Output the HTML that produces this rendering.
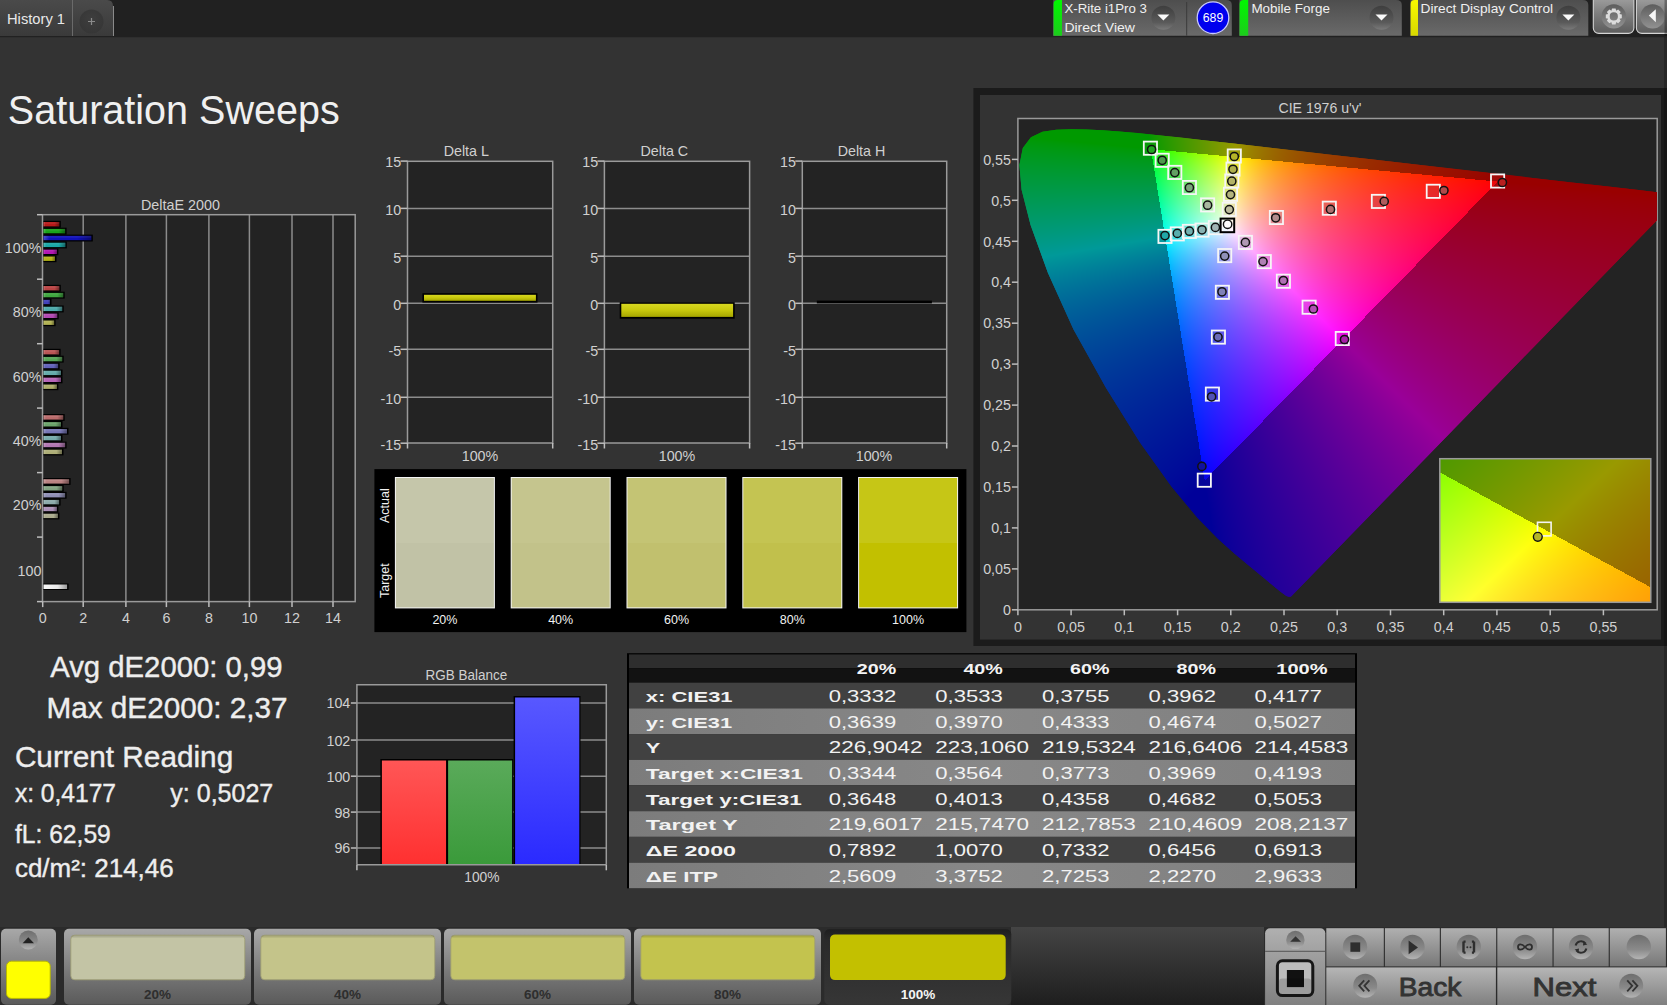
<!DOCTYPE html>
<html><head><meta charset="utf-8"><title>Saturation Sweeps</title>
<style>
html,body{margin:0;padding:0;width:1667px;height:1005px;overflow:hidden;background:#333333;}
svg{position:absolute;left:0;top:0;font-family:"Liberation Sans",sans-serif;}
canvas{position:absolute;}
</style></head><body>
<svg width="1667" height="1005" viewBox="0 0 1667 1005"><defs>
<linearGradient id="tabg" x1="0" y1="0" x2="0" y2="1"><stop offset="0" stop-color="#4a4a4a"/><stop offset="1" stop-color="#3a3a3a"/></linearGradient>
<radialGradient id="plusg" cx="0.5" cy="0.4" r="0.6"><stop offset="0" stop-color="#3e3e3e"/><stop offset="1" stop-color="#363636"/></radialGradient>
<linearGradient id="barsh" x1="0" y1="0" x2="1" y2="0"><stop offset="0" stop-color="#fff" stop-opacity="0.22"/><stop offset="0.12" stop-color="#fff" stop-opacity="0"/><stop offset="0.7" stop-color="#000" stop-opacity="0"/><stop offset="1" stop-color="#000" stop-opacity="0.4"/></linearGradient>
<linearGradient id="whitebar" x1="0" y1="0" x2="1" y2="0"><stop offset="0" stop-color="#fafafa"/><stop offset="0.6" stop-color="#e8e8e8"/><stop offset="1" stop-color="#9a9a9a"/></linearGradient>

<linearGradient id="ybar" x1="0" y1="0" x2="0" y2="1"><stop offset="0" stop-color="#d8d820"/><stop offset="0.5" stop-color="#c8c80c"/><stop offset="1" stop-color="#a6a600"/></linearGradient>

<linearGradient id="ciefb" x1="0" y1="0" x2="1" y2="0"><stop offset="0" stop-color="#009060"/><stop offset="0.35" stop-color="#60d0c0"/><stop offset="0.6" stop-color="#ff60a0"/><stop offset="1" stop-color="#a00010"/></linearGradient>

<linearGradient id="rbar" x1="0" y1="0" x2="0" y2="1"><stop offset="0" stop-color="#ff5656"/><stop offset="1" stop-color="#ff3030"/></linearGradient>
<linearGradient id="gbar" x1="0" y1="0" x2="0" y2="1"><stop offset="0" stop-color="#5aaa5a"/><stop offset="1" stop-color="#3a9a3a"/></linearGradient>
<linearGradient id="bbar" x1="0" y1="0" x2="0" y2="1"><stop offset="0" stop-color="#5858ff"/><stop offset="1" stop-color="#2a2aff"/></linearGradient>
<linearGradient id="lrow" x1="0" y1="0" x2="1" y2="0"><stop offset="0" stop-color="#7c7c7c"/><stop offset="0.5" stop-color="#888888"/><stop offset="1" stop-color="#7e7e7e"/></linearGradient>

<linearGradient id="grs" x1="0" y1="0" x2="0" y2="1"><stop offset="0" stop-color="#00f800"/><stop offset="1" stop-color="#1ccc1c"/></linearGradient>
<linearGradient id="yls" x1="0" y1="0" x2="0" y2="1"><stop offset="0" stop-color="#f8f800"/><stop offset="1" stop-color="#d8d800"/></linearGradient>
<linearGradient id="gbtn" x1="0" y1="0" x2="0" y2="1"><stop offset="0" stop-color="#a6a6a6"/><stop offset="0.5" stop-color="#7e7e7e"/><stop offset="1" stop-color="#5c5c5c"/></linearGradient>
<linearGradient id="gcirc" x1="0" y1="0" x2="0" y2="1"><stop offset="0" stop-color="#5c5c5c"/><stop offset="1" stop-color="#929292"/></linearGradient>
<linearGradient id="btng" x1="0" y1="0" x2="0" y2="1"><stop offset="0" stop-color="#a8a8a8"/><stop offset="0.66" stop-color="#727272"/><stop offset="1" stop-color="#5a5a5a"/></linearGradient>
<linearGradient id="btng2" x1="0" y1="0" x2="0" y2="1"><stop offset="0" stop-color="#b0b0b0"/><stop offset="1" stop-color="#787878"/></linearGradient>
<linearGradient id="btng3" x1="0" y1="0" x2="0" y2="1"><stop offset="0" stop-color="#b6b6b6"/><stop offset="1" stop-color="#7c7c7c"/></linearGradient>
<linearGradient id="selg" x1="0" y1="0" x2="0" y2="1"><stop offset="0" stop-color="#1e1e1e"/><stop offset="0.15" stop-color="#2a2a2a"/><stop offset="1" stop-color="#363636"/></linearGradient>
<linearGradient id="fdark" x1="0" y1="0" x2="0" y2="1"><stop offset="0" stop-color="#444444"/><stop offset="1" stop-color="#1e1e1e"/></linearGradient>
<linearGradient id="circg" x1="0" y1="0" x2="0" y2="1"><stop offset="0" stop-color="#6e6e6e"/><stop offset="0.6" stop-color="#8a8a8a"/><stop offset="1" stop-color="#b4b4b4"/></linearGradient>
<linearGradient id="tpg" x1="0" y1="0" x2="0" y2="1"><stop offset="0" stop-color="#4e4e4e"/><stop offset="1" stop-color="#6a6a6a"/></linearGradient>
<linearGradient id="ddg" x1="0" y1="0" x2="0" y2="1"><stop offset="0" stop-color="#3e3e3e"/><stop offset="0.7" stop-color="#5a5a5a"/><stop offset="1" stop-color="#7a7a7a"/></linearGradient>
</defs>
<rect x="0" y="0" width="1667" height="37.2" fill="#212121"/>
<path d="M0 0 H107 Q113 0 113 6 V36 H0 Z" fill="url(#tabg)"/>
<line x1="72.5" y1="0" x2="72.5" y2="36" stroke="#6a6a6a" stroke-width="1"/>
<path d="M113.5 6 V36" stroke="#8a8a8a" stroke-width="1" fill="none"/>
<circle cx="91.5" cy="21.5" r="12" fill="url(#plusg)"/>
<path d="M88 21.5 H95 M91.5 18 V25" stroke="#8a8a8a" stroke-width="1.2"/>
<text x="7.0" y="24.2" font-size="14.3" fill="#e8e8e8" textLength="58.0" lengthAdjust="spacingAndGlyphs">History 1</text>
<path d="M1053.2 0 H1226 Q1231.8 0 1231.8 5 V35.7 H1053.2 Z" fill="url(#tpg)"/>
<path d="M1053.6 35.7 V4 Q1053.6 0 1057.6 0 H1062 V35.7 Z" fill="url(#grs)"/>
<line x1="1186.7" y1="2" x2="1186.7" y2="35.7" stroke="#3a3a3a" stroke-width="1"/>
<text x="1064.4" y="13.2" font-size="13.3" fill="#f0f0f0" textLength="82.5" lengthAdjust="spacingAndGlyphs">X-Rite i1Pro 3</text>
<text x="1064.4" y="32.0" font-size="13.3" fill="#f0f0f0" textLength="70.6" lengthAdjust="spacingAndGlyphs">Direct View</text>
<circle cx="1163.4" cy="17.7" r="12" fill="url(#ddg)"/>
<path d="M1157.4 14.4 H1169.4 L1163.4 20.6 Z" fill="#fafafa"/>
<circle cx="1213" cy="17.7" r="15.8" fill="#0000ee" stroke="#c8c8ff" stroke-width="1.3"/>
<text x="1213.0" y="22.3" font-size="12.3" fill="#ffffff" text-anchor="middle">689</text>
<path d="M1239.3 0 H1396 Q1401.8 0 1401.8 5 V35.7 H1239.3 Z" fill="url(#tpg)"/>
<path d="M1239.6 35.7 V4 Q1239.6 0 1243.6 0 H1248.2 V35.7 Z" fill="url(#grs)"/>
<text x="1251.4" y="13.2" font-size="13.3" fill="#f0f0f0" textLength="78.5" lengthAdjust="spacingAndGlyphs">Mobile Forge</text>
<circle cx="1381.5" cy="17.7" r="12" fill="url(#ddg)"/>
<path d="M1375.5 14.4 H1387.5 L1381.5 20.6 Z" fill="#fafafa"/>
<path d="M1410.4 0 H1582.5 Q1588.3 0 1588.3 5 V35.7 H1410.4 Z" fill="url(#tpg)"/>
<path d="M1410.6 35.7 V4 Q1410.6 0 1414.6 0 H1418 V35.7 Z" fill="url(#yls)"/>
<text x="1420.6" y="13.2" font-size="13.3" fill="#f0f0f0" textLength="132.5" lengthAdjust="spacingAndGlyphs">Direct Display Control</text>
<circle cx="1568.4" cy="17.7" r="12" fill="url(#ddg)"/>
<path d="M1562.4 14.4 H1574.4 L1568.4 20.6 Z" fill="#fafafa"/>
<rect x="1593.3" y="-6" width="40.6" height="39.4" rx="5.5" fill="url(#gbtn)" stroke="#d4d4d4" stroke-width="1.1"/>
<circle cx="1613.8" cy="16.4" r="12.2" fill="url(#gcirc)"/>
<path d="M1611.42 10.78 L1612.01 8.40 L1615.59 8.40 L1616.18 10.78 L1616.09 10.75 L1618.19 9.48 L1620.72 12.01 L1619.45 14.11 L1619.42 14.02 L1621.80 14.61 L1621.80 18.19 L1619.42 18.78 L1619.45 18.69 L1620.72 20.79 L1618.19 23.32 L1616.09 22.05 L1616.18 22.02 L1615.59 24.40 L1612.01 24.40 L1611.42 22.02 L1611.51 22.05 L1609.41 23.32 L1606.88 20.79 L1608.15 18.69 L1608.18 18.78 L1605.80 18.19 L1605.80 14.61 L1608.18 14.02 L1608.15 14.11 L1606.88 12.01 L1609.41 9.48 L1611.51 10.75 Z M1617.9 16.4 A4.1 4.1 0 1 0 1609.7 16.4 A4.1 4.1 0 1 0 1617.9 16.4 Z" fill="#dcdcdc" fill-rule="evenodd"/>
<rect x="1636.4" y="-6" width="40" height="39.4" rx="5.5" fill="url(#gbtn)" stroke="#d4d4d4" stroke-width="1.1"/>
<circle cx="1652.6" cy="16.4" r="12.2" fill="url(#gcirc)"/>
<path d="M1655.8 9.2 V22.2 L1648.8 15.6 Z" fill="#f6f6f6"/>
<rect x="1664.5" y="0" width="2.5" height="36" fill="#000" opacity="0.3"/>
<text x="7.8" y="123.8" font-size="40.7" fill="#f0f0f0" textLength="332.0" lengthAdjust="spacingAndGlyphs">Saturation Sweeps</text>
<text x="180.5" y="209.6" font-size="14.3" fill="#d0d0d0" text-anchor="middle" textLength="79.0" lengthAdjust="spacingAndGlyphs">DeltaE 2000</text>
<rect x="42.5" y="214.7" width="312.7" height="386.9" fill="#232323"/>
<line x1="83.2" y1="214.7" x2="83.2" y2="601.6" stroke="#8c8c8c" stroke-width="1.5"/>
<line x1="125.9" y1="214.7" x2="125.9" y2="601.6" stroke="#8c8c8c" stroke-width="1.5"/>
<line x1="166.4" y1="214.7" x2="166.4" y2="601.6" stroke="#8c8c8c" stroke-width="1.5"/>
<line x1="208.9" y1="214.7" x2="208.9" y2="601.6" stroke="#8c8c8c" stroke-width="1.5"/>
<line x1="249.4" y1="214.7" x2="249.4" y2="601.6" stroke="#8c8c8c" stroke-width="1.5"/>
<line x1="292.0" y1="214.7" x2="292.0" y2="601.6" stroke="#8c8c8c" stroke-width="1.5"/>
<line x1="333.0" y1="214.7" x2="333.0" y2="601.6" stroke="#8c8c8c" stroke-width="1.5"/>
<rect x="42.5" y="214.7" width="312.7" height="386.9" fill="none" stroke="#9a9a9a" stroke-width="1.5"/>
<line x1="37" y1="214.7" x2="42.5" y2="214.7" stroke="#bdbdbd" stroke-width="1.5"/>
<line x1="37" y1="279.2" x2="42.5" y2="279.2" stroke="#bdbdbd" stroke-width="1.5"/>
<line x1="37" y1="343.7" x2="42.5" y2="343.7" stroke="#bdbdbd" stroke-width="1.5"/>
<line x1="37" y1="408.1" x2="42.5" y2="408.1" stroke="#bdbdbd" stroke-width="1.5"/>
<line x1="37" y1="472.6" x2="42.5" y2="472.6" stroke="#bdbdbd" stroke-width="1.5"/>
<line x1="37" y1="537.1" x2="42.5" y2="537.1" stroke="#bdbdbd" stroke-width="1.5"/>
<line x1="37" y1="601.6" x2="42.5" y2="601.6" stroke="#bdbdbd" stroke-width="1.5"/>
<line x1="42.7" y1="601.6" x2="42.7" y2="607.1" stroke="#bdbdbd" stroke-width="1.5"/>
<text x="42.7" y="622.9" font-size="14.3" fill="#d0d0d0" text-anchor="middle">0</text>
<line x1="83.2" y1="601.6" x2="83.2" y2="607.1" stroke="#bdbdbd" stroke-width="1.5"/>
<text x="83.2" y="622.9" font-size="14.3" fill="#d0d0d0" text-anchor="middle">2</text>
<line x1="125.9" y1="601.6" x2="125.9" y2="607.1" stroke="#bdbdbd" stroke-width="1.5"/>
<text x="125.9" y="622.9" font-size="14.3" fill="#d0d0d0" text-anchor="middle">4</text>
<line x1="166.4" y1="601.6" x2="166.4" y2="607.1" stroke="#bdbdbd" stroke-width="1.5"/>
<text x="166.4" y="622.9" font-size="14.3" fill="#d0d0d0" text-anchor="middle">6</text>
<line x1="208.9" y1="601.6" x2="208.9" y2="607.1" stroke="#bdbdbd" stroke-width="1.5"/>
<text x="208.9" y="622.9" font-size="14.3" fill="#d0d0d0" text-anchor="middle">8</text>
<line x1="249.4" y1="601.6" x2="249.4" y2="607.1" stroke="#bdbdbd" stroke-width="1.5"/>
<text x="249.4" y="622.9" font-size="14.3" fill="#d0d0d0" text-anchor="middle">10</text>
<line x1="292.0" y1="601.6" x2="292.0" y2="607.1" stroke="#bdbdbd" stroke-width="1.5"/>
<text x="292.0" y="622.9" font-size="14.3" fill="#d0d0d0" text-anchor="middle">12</text>
<line x1="333.0" y1="601.6" x2="333.0" y2="607.1" stroke="#bdbdbd" stroke-width="1.5"/>
<text x="333.0" y="622.9" font-size="14.3" fill="#d0d0d0" text-anchor="middle">14</text>
<text x="41.4" y="253.3" font-size="14.3" fill="#d0d0d0" text-anchor="end">100%</text>
<text x="41.4" y="317.2" font-size="14.3" fill="#d0d0d0" text-anchor="end">80%</text>
<text x="41.4" y="381.5" font-size="14.3" fill="#d0d0d0" text-anchor="end">60%</text>
<text x="41.4" y="445.8" font-size="14.3" fill="#d0d0d0" text-anchor="end">40%</text>
<text x="41.4" y="510.0" font-size="14.3" fill="#d0d0d0" text-anchor="end">20%</text>
<text x="41.4" y="575.9" font-size="14.3" fill="#d0d0d0" text-anchor="end">100</text>
<rect x="43.5" y="220.8" width="17.3" height="6.9" fill="#000"/>
<rect x="43.5" y="222.0" width="15.8" height="4.4" fill="#b61a1a"/>
<rect x="43.5" y="222.0" width="15.8" height="4.4" fill="url(#barsh)"/>
<rect x="43.5" y="222.4" width="15.8" height="1.4" fill="#fff" opacity="0.08"/>
<rect x="43.5" y="227.7" width="23.1" height="6.9" fill="#000"/>
<rect x="43.5" y="228.9" width="21.6" height="4.4" fill="#1aa31a"/>
<rect x="43.5" y="228.9" width="21.6" height="4.4" fill="url(#barsh)"/>
<rect x="43.5" y="229.3" width="21.6" height="1.4" fill="#fff" opacity="0.08"/>
<rect x="43.5" y="234.6" width="49.3" height="6.9" fill="#000"/>
<rect x="43.5" y="235.8" width="47.8" height="4.4" fill="#1010ba"/>
<rect x="43.5" y="235.8" width="47.8" height="4.4" fill="url(#barsh)"/>
<rect x="43.5" y="236.2" width="47.8" height="1.4" fill="#fff" opacity="0.08"/>
<rect x="43.5" y="241.5" width="23.3" height="6.9" fill="#000"/>
<rect x="43.5" y="242.7" width="21.8" height="4.4" fill="#1aa7a7"/>
<rect x="43.5" y="242.7" width="21.8" height="4.4" fill="url(#barsh)"/>
<rect x="43.5" y="243.1" width="21.8" height="1.4" fill="#fff" opacity="0.08"/>
<rect x="43.5" y="248.4" width="14.9" height="6.9" fill="#000"/>
<rect x="43.5" y="249.6" width="13.4" height="4.4" fill="#b216b2"/>
<rect x="43.5" y="249.6" width="13.4" height="4.4" fill="url(#barsh)"/>
<rect x="43.5" y="250.0" width="13.4" height="1.4" fill="#fff" opacity="0.08"/>
<rect x="43.5" y="255.3" width="13.0" height="6.9" fill="#000"/>
<rect x="43.5" y="256.5" width="11.5" height="4.4" fill="#b2b216"/>
<rect x="43.5" y="256.5" width="11.5" height="4.4" fill="url(#barsh)"/>
<rect x="43.5" y="256.9" width="11.5" height="1.4" fill="#fff" opacity="0.08"/>
<rect x="43.5" y="284.8" width="17.3" height="6.9" fill="#000"/>
<rect x="43.5" y="286.0" width="15.8" height="4.4" fill="#ba4444"/>
<rect x="43.5" y="286.0" width="15.8" height="4.4" fill="url(#barsh)"/>
<rect x="43.5" y="286.4" width="15.8" height="1.4" fill="#fff" opacity="0.08"/>
<rect x="43.5" y="291.7" width="21.2" height="6.9" fill="#000"/>
<rect x="43.5" y="292.9" width="19.7" height="4.4" fill="#3fa73f"/>
<rect x="43.5" y="292.9" width="19.7" height="4.4" fill="url(#barsh)"/>
<rect x="43.5" y="293.3" width="19.7" height="1.4" fill="#fff" opacity="0.08"/>
<rect x="43.5" y="298.6" width="8.0" height="6.9" fill="#000"/>
<rect x="43.5" y="299.8" width="6.5" height="4.4" fill="#4242ba"/>
<rect x="43.5" y="299.8" width="6.5" height="4.4" fill="url(#barsh)"/>
<rect x="43.5" y="300.2" width="6.5" height="1.4" fill="#fff" opacity="0.08"/>
<rect x="43.5" y="305.5" width="20.2" height="6.9" fill="#000"/>
<rect x="43.5" y="306.7" width="18.7" height="4.4" fill="#4ca9a9"/>
<rect x="43.5" y="306.7" width="18.7" height="4.4" fill="url(#barsh)"/>
<rect x="43.5" y="307.1" width="18.7" height="1.4" fill="#fff" opacity="0.08"/>
<rect x="43.5" y="312.4" width="15.2" height="6.9" fill="#000"/>
<rect x="43.5" y="313.6" width="13.7" height="4.4" fill="#b248b2"/>
<rect x="43.5" y="313.6" width="13.7" height="4.4" fill="url(#barsh)"/>
<rect x="43.5" y="314.0" width="13.7" height="1.4" fill="#fff" opacity="0.08"/>
<rect x="43.5" y="319.3" width="12.1" height="6.9" fill="#000"/>
<rect x="43.5" y="320.5" width="10.6" height="4.4" fill="#b2b253"/>
<rect x="43.5" y="320.5" width="10.6" height="4.4" fill="url(#barsh)"/>
<rect x="43.5" y="320.9" width="10.6" height="1.4" fill="#fff" opacity="0.08"/>
<rect x="43.5" y="348.8" width="17.1" height="6.9" fill="#000"/>
<rect x="43.5" y="350.0" width="15.6" height="4.4" fill="#ba5555"/>
<rect x="43.5" y="350.0" width="15.6" height="4.4" fill="url(#barsh)"/>
<rect x="43.5" y="350.4" width="15.6" height="1.4" fill="#fff" opacity="0.08"/>
<rect x="43.5" y="355.7" width="20.2" height="6.9" fill="#000"/>
<rect x="43.5" y="356.9" width="18.7" height="4.4" fill="#55a355"/>
<rect x="43.5" y="356.9" width="18.7" height="4.4" fill="url(#barsh)"/>
<rect x="43.5" y="357.3" width="18.7" height="1.4" fill="#fff" opacity="0.08"/>
<rect x="43.5" y="362.6" width="16.1" height="6.9" fill="#000"/>
<rect x="43.5" y="363.8" width="14.6" height="4.4" fill="#6262ba"/>
<rect x="43.5" y="363.8" width="14.6" height="4.4" fill="url(#barsh)"/>
<rect x="43.5" y="364.2" width="14.6" height="1.4" fill="#fff" opacity="0.08"/>
<rect x="43.5" y="369.5" width="19.0" height="6.9" fill="#000"/>
<rect x="43.5" y="370.7" width="17.5" height="4.4" fill="#64abab"/>
<rect x="43.5" y="370.7" width="17.5" height="4.4" fill="url(#barsh)"/>
<rect x="43.5" y="371.1" width="17.5" height="1.4" fill="#fff" opacity="0.08"/>
<rect x="43.5" y="376.4" width="19.0" height="6.9" fill="#000"/>
<rect x="43.5" y="377.6" width="17.5" height="4.4" fill="#b664b6"/>
<rect x="43.5" y="377.6" width="17.5" height="4.4" fill="url(#barsh)"/>
<rect x="43.5" y="378.0" width="17.5" height="1.4" fill="#fff" opacity="0.08"/>
<rect x="43.5" y="383.3" width="14.9" height="6.9" fill="#000"/>
<rect x="43.5" y="384.5" width="13.4" height="4.4" fill="#aeae68"/>
<rect x="43.5" y="384.5" width="13.4" height="4.4" fill="url(#barsh)"/>
<rect x="43.5" y="384.9" width="13.4" height="1.4" fill="#fff" opacity="0.08"/>
<rect x="43.5" y="414.0" width="21.2" height="6.9" fill="#000"/>
<rect x="43.5" y="415.2" width="19.7" height="4.4" fill="#ba6b6b"/>
<rect x="43.5" y="415.2" width="19.7" height="4.4" fill="url(#barsh)"/>
<rect x="43.5" y="415.6" width="19.7" height="1.4" fill="#fff" opacity="0.08"/>
<rect x="43.5" y="420.9" width="19.0" height="6.9" fill="#000"/>
<rect x="43.5" y="422.1" width="17.5" height="4.4" fill="#6ba36b"/>
<rect x="43.5" y="422.1" width="17.5" height="4.4" fill="url(#barsh)"/>
<rect x="43.5" y="422.5" width="17.5" height="1.4" fill="#fff" opacity="0.08"/>
<rect x="43.5" y="427.8" width="25.0" height="6.9" fill="#000"/>
<rect x="43.5" y="429.0" width="23.5" height="4.4" fill="#7777b6"/>
<rect x="43.5" y="429.0" width="23.5" height="4.4" fill="url(#barsh)"/>
<rect x="43.5" y="429.4" width="23.5" height="1.4" fill="#fff" opacity="0.08"/>
<rect x="43.5" y="434.7" width="19.0" height="6.9" fill="#000"/>
<rect x="43.5" y="435.9" width="17.5" height="4.4" fill="#77abab"/>
<rect x="43.5" y="435.9" width="17.5" height="4.4" fill="url(#barsh)"/>
<rect x="43.5" y="436.3" width="17.5" height="1.4" fill="#fff" opacity="0.08"/>
<rect x="43.5" y="441.6" width="23.1" height="6.9" fill="#000"/>
<rect x="43.5" y="442.8" width="21.6" height="4.4" fill="#b277b2"/>
<rect x="43.5" y="442.8" width="21.6" height="4.4" fill="url(#barsh)"/>
<rect x="43.5" y="443.2" width="21.6" height="1.4" fill="#fff" opacity="0.08"/>
<rect x="43.5" y="448.5" width="20.0" height="6.9" fill="#000"/>
<rect x="43.5" y="449.7" width="18.5" height="4.4" fill="#aeae77"/>
<rect x="43.5" y="449.7" width="18.5" height="4.4" fill="url(#barsh)"/>
<rect x="43.5" y="450.1" width="18.5" height="1.4" fill="#fff" opacity="0.08"/>
<rect x="43.5" y="478.0" width="27.1" height="6.9" fill="#000"/>
<rect x="43.5" y="479.2" width="25.6" height="4.4" fill="#ba8282"/>
<rect x="43.5" y="479.2" width="25.6" height="4.4" fill="url(#barsh)"/>
<rect x="43.5" y="479.6" width="25.6" height="1.4" fill="#fff" opacity="0.08"/>
<rect x="43.5" y="484.9" width="20.2" height="6.9" fill="#000"/>
<rect x="43.5" y="486.1" width="18.7" height="4.4" fill="#82a382"/>
<rect x="43.5" y="486.1" width="18.7" height="4.4" fill="url(#barsh)"/>
<rect x="43.5" y="486.5" width="18.7" height="1.4" fill="#fff" opacity="0.08"/>
<rect x="43.5" y="491.8" width="23.1" height="6.9" fill="#000"/>
<rect x="43.5" y="493.0" width="21.6" height="4.4" fill="#8f8fb6"/>
<rect x="43.5" y="493.0" width="21.6" height="4.4" fill="url(#barsh)"/>
<rect x="43.5" y="493.4" width="21.6" height="1.4" fill="#fff" opacity="0.08"/>
<rect x="43.5" y="498.7" width="17.1" height="6.9" fill="#000"/>
<rect x="43.5" y="499.9" width="15.6" height="4.4" fill="#8dabab"/>
<rect x="43.5" y="499.9" width="15.6" height="4.4" fill="url(#barsh)"/>
<rect x="43.5" y="500.3" width="15.6" height="1.4" fill="#fff" opacity="0.08"/>
<rect x="43.5" y="505.6" width="14.9" height="6.9" fill="#000"/>
<rect x="43.5" y="506.8" width="13.4" height="4.4" fill="#ab8fb6"/>
<rect x="43.5" y="506.8" width="13.4" height="4.4" fill="url(#barsh)"/>
<rect x="43.5" y="507.2" width="13.4" height="1.4" fill="#fff" opacity="0.08"/>
<rect x="43.5" y="512.5" width="15.9" height="6.9" fill="#000"/>
<rect x="43.5" y="513.7" width="14.4" height="4.4" fill="#abab8d"/>
<rect x="43.5" y="513.7" width="14.4" height="4.4" fill="url(#barsh)"/>
<rect x="43.5" y="514.1" width="14.4" height="1.4" fill="#fff" opacity="0.08"/>
<rect x="43.5" y="583.5" width="25.1" height="6.5" fill="#000"/>
<rect x="43.5" y="584.5" width="23.6" height="4.5" fill="url(#whitebar)"/>
<text x="466.3" y="155.9" font-size="14.3" fill="#d0d0d0" text-anchor="middle">Delta L</text>
<rect x="407.5" y="161.3" width="145.2" height="281.7" fill="#232323"/>
<line x1="407.5" y1="208.4" x2="552.7" y2="208.4" stroke="#8c8c8c" stroke-width="1.5"/>
<line x1="407.5" y1="256.2" x2="552.7" y2="256.2" stroke="#8c8c8c" stroke-width="1.5"/>
<line x1="407.5" y1="303.3" x2="552.7" y2="303.3" stroke="#8c8c8c" stroke-width="1.5"/>
<line x1="407.5" y1="349.3" x2="552.7" y2="349.3" stroke="#8c8c8c" stroke-width="1.5"/>
<line x1="407.5" y1="397.3" x2="552.7" y2="397.3" stroke="#8c8c8c" stroke-width="1.5"/>
<rect x="407.5" y="161.3" width="145.2" height="281.7" fill="none" stroke="#9a9a9a" stroke-width="1.5"/>
<line x1="400.5" y1="161.1" x2="407.5" y2="161.1" stroke="#bdbdbd" stroke-width="1.5"/>
<text x="401.2" y="167.4" font-size="14.3" fill="#d0d0d0" text-anchor="end">15</text>
<line x1="400.5" y1="208.4" x2="407.5" y2="208.4" stroke="#bdbdbd" stroke-width="1.5"/>
<text x="401.2" y="214.7" font-size="14.3" fill="#d0d0d0" text-anchor="end">10</text>
<line x1="400.5" y1="256.2" x2="407.5" y2="256.2" stroke="#bdbdbd" stroke-width="1.5"/>
<text x="401.2" y="262.5" font-size="14.3" fill="#d0d0d0" text-anchor="end">5</text>
<line x1="400.5" y1="303.3" x2="407.5" y2="303.3" stroke="#bdbdbd" stroke-width="1.5"/>
<text x="401.2" y="309.6" font-size="14.3" fill="#d0d0d0" text-anchor="end">0</text>
<line x1="400.5" y1="349.3" x2="407.5" y2="349.3" stroke="#bdbdbd" stroke-width="1.5"/>
<text x="401.2" y="355.6" font-size="14.3" fill="#d0d0d0" text-anchor="end">-5</text>
<line x1="400.5" y1="397.3" x2="407.5" y2="397.3" stroke="#bdbdbd" stroke-width="1.5"/>
<text x="401.2" y="403.6" font-size="14.3" fill="#d0d0d0" text-anchor="end">-10</text>
<line x1="400.5" y1="443.2" x2="407.5" y2="443.2" stroke="#bdbdbd" stroke-width="1.5"/>
<text x="401.2" y="449.5" font-size="14.3" fill="#d0d0d0" text-anchor="end">-15</text>
<line x1="407.5" y1="443.0" x2="407.5" y2="448.5" stroke="#bdbdbd" stroke-width="1.5"/>
<line x1="552.7" y1="443.0" x2="552.7" y2="448.5" stroke="#bdbdbd" stroke-width="1.5"/>
<text x="480.0" y="460.5" font-size="14.3" fill="#d0d0d0" text-anchor="middle">100%</text>
<rect x="422.4" y="293.2" width="115.1" height="9.4" fill="#000"/>
<rect x="424.0" y="294.8" width="111.9" height="6.0" fill="url(#ybar)"/>
<text x="664.3" y="155.9" font-size="14.3" fill="#d0d0d0" text-anchor="middle">Delta C</text>
<rect x="604.4" y="161.3" width="145.2" height="281.7" fill="#232323"/>
<line x1="604.4" y1="208.4" x2="749.6" y2="208.4" stroke="#8c8c8c" stroke-width="1.5"/>
<line x1="604.4" y1="256.2" x2="749.6" y2="256.2" stroke="#8c8c8c" stroke-width="1.5"/>
<line x1="604.4" y1="303.3" x2="749.6" y2="303.3" stroke="#8c8c8c" stroke-width="1.5"/>
<line x1="604.4" y1="349.3" x2="749.6" y2="349.3" stroke="#8c8c8c" stroke-width="1.5"/>
<line x1="604.4" y1="397.3" x2="749.6" y2="397.3" stroke="#8c8c8c" stroke-width="1.5"/>
<rect x="604.4" y="161.3" width="145.2" height="281.7" fill="none" stroke="#9a9a9a" stroke-width="1.5"/>
<line x1="597.4" y1="161.1" x2="604.4" y2="161.1" stroke="#bdbdbd" stroke-width="1.5"/>
<text x="598.1" y="167.4" font-size="14.3" fill="#d0d0d0" text-anchor="end">15</text>
<line x1="597.4" y1="208.4" x2="604.4" y2="208.4" stroke="#bdbdbd" stroke-width="1.5"/>
<text x="598.1" y="214.7" font-size="14.3" fill="#d0d0d0" text-anchor="end">10</text>
<line x1="597.4" y1="256.2" x2="604.4" y2="256.2" stroke="#bdbdbd" stroke-width="1.5"/>
<text x="598.1" y="262.5" font-size="14.3" fill="#d0d0d0" text-anchor="end">5</text>
<line x1="597.4" y1="303.3" x2="604.4" y2="303.3" stroke="#bdbdbd" stroke-width="1.5"/>
<text x="598.1" y="309.6" font-size="14.3" fill="#d0d0d0" text-anchor="end">0</text>
<line x1="597.4" y1="349.3" x2="604.4" y2="349.3" stroke="#bdbdbd" stroke-width="1.5"/>
<text x="598.1" y="355.6" font-size="14.3" fill="#d0d0d0" text-anchor="end">-5</text>
<line x1="597.4" y1="397.3" x2="604.4" y2="397.3" stroke="#bdbdbd" stroke-width="1.5"/>
<text x="598.1" y="403.6" font-size="14.3" fill="#d0d0d0" text-anchor="end">-10</text>
<line x1="597.4" y1="443.2" x2="604.4" y2="443.2" stroke="#bdbdbd" stroke-width="1.5"/>
<text x="598.1" y="449.5" font-size="14.3" fill="#d0d0d0" text-anchor="end">-15</text>
<line x1="604.4" y1="443.0" x2="604.4" y2="448.5" stroke="#bdbdbd" stroke-width="1.5"/>
<line x1="749.6" y1="443.0" x2="749.6" y2="448.5" stroke="#bdbdbd" stroke-width="1.5"/>
<text x="677.0" y="460.5" font-size="14.3" fill="#d0d0d0" text-anchor="middle">100%</text>
<rect x="619.7" y="302.2" width="115.0" height="16.5" fill="#000"/>
<rect x="621.3" y="303.8" width="111.8" height="13.1" fill="url(#ybar)"/>
<text x="861.5" y="155.9" font-size="14.3" fill="#d0d0d0" text-anchor="middle">Delta H</text>
<rect x="802.3" y="161.3" width="144.4" height="281.7" fill="#232323"/>
<line x1="802.3" y1="208.4" x2="946.7" y2="208.4" stroke="#8c8c8c" stroke-width="1.5"/>
<line x1="802.3" y1="256.2" x2="946.7" y2="256.2" stroke="#8c8c8c" stroke-width="1.5"/>
<line x1="802.3" y1="303.3" x2="946.7" y2="303.3" stroke="#8c8c8c" stroke-width="1.5"/>
<line x1="802.3" y1="349.3" x2="946.7" y2="349.3" stroke="#8c8c8c" stroke-width="1.5"/>
<line x1="802.3" y1="397.3" x2="946.7" y2="397.3" stroke="#8c8c8c" stroke-width="1.5"/>
<rect x="802.3" y="161.3" width="144.4" height="281.7" fill="none" stroke="#9a9a9a" stroke-width="1.5"/>
<line x1="795.3" y1="161.1" x2="802.3" y2="161.1" stroke="#bdbdbd" stroke-width="1.5"/>
<text x="796.0" y="167.4" font-size="14.3" fill="#d0d0d0" text-anchor="end">15</text>
<line x1="795.3" y1="208.4" x2="802.3" y2="208.4" stroke="#bdbdbd" stroke-width="1.5"/>
<text x="796.0" y="214.7" font-size="14.3" fill="#d0d0d0" text-anchor="end">10</text>
<line x1="795.3" y1="256.2" x2="802.3" y2="256.2" stroke="#bdbdbd" stroke-width="1.5"/>
<text x="796.0" y="262.5" font-size="14.3" fill="#d0d0d0" text-anchor="end">5</text>
<line x1="795.3" y1="303.3" x2="802.3" y2="303.3" stroke="#bdbdbd" stroke-width="1.5"/>
<text x="796.0" y="309.6" font-size="14.3" fill="#d0d0d0" text-anchor="end">0</text>
<line x1="795.3" y1="349.3" x2="802.3" y2="349.3" stroke="#bdbdbd" stroke-width="1.5"/>
<text x="796.0" y="355.6" font-size="14.3" fill="#d0d0d0" text-anchor="end">-5</text>
<line x1="795.3" y1="397.3" x2="802.3" y2="397.3" stroke="#bdbdbd" stroke-width="1.5"/>
<text x="796.0" y="403.6" font-size="14.3" fill="#d0d0d0" text-anchor="end">-10</text>
<line x1="795.3" y1="443.2" x2="802.3" y2="443.2" stroke="#bdbdbd" stroke-width="1.5"/>
<text x="796.0" y="449.5" font-size="14.3" fill="#d0d0d0" text-anchor="end">-15</text>
<line x1="802.3" y1="443.0" x2="802.3" y2="448.5" stroke="#bdbdbd" stroke-width="1.5"/>
<line x1="946.7" y1="443.0" x2="946.7" y2="448.5" stroke="#bdbdbd" stroke-width="1.5"/>
<text x="874.0" y="460.5" font-size="14.3" fill="#d0d0d0" text-anchor="middle">100%</text>
<rect x="816.8" y="300.6" width="115.1" height="2.8" fill="#000"/>
<rect x="374.4" y="469.1" width="592" height="163" fill="#000"/>
<rect x="394.9" y="477" width="100" height="131.4" fill="#f4f4f4"/>
<rect x="395.9" y="478" width="98" height="65" fill="#c5c6aa"/>
<rect x="395.9" y="543" width="98" height="64.4" fill="#c1c2a6"/>
<text x="444.9" y="624.0" font-size="12.5" fill="#f2f2f2" text-anchor="middle">20%</text>
<rect x="510.7" y="477" width="100" height="131.4" fill="#f4f4f4"/>
<rect x="511.7" y="478" width="98" height="65" fill="#c5c58e"/>
<rect x="511.7" y="543" width="98" height="64.4" fill="#c2c28a"/>
<text x="560.7" y="624.0" font-size="12.5" fill="#f2f2f2" text-anchor="middle">40%</text>
<rect x="626.5" y="477" width="100" height="131.4" fill="#f4f4f4"/>
<rect x="627.5" y="478" width="98" height="65" fill="#c4c474"/>
<rect x="627.5" y="543" width="98" height="64.4" fill="#c1c06e"/>
<text x="676.5" y="624.0" font-size="12.5" fill="#f2f2f2" text-anchor="middle">60%</text>
<rect x="742.3" y="477" width="100" height="131.4" fill="#f4f4f4"/>
<rect x="743.3" y="478" width="98" height="65" fill="#c4c452"/>
<rect x="743.3" y="543" width="98" height="64.4" fill="#c1c04c"/>
<text x="792.3" y="624.0" font-size="12.5" fill="#f2f2f2" text-anchor="middle">80%</text>
<rect x="858.1" y="477" width="100" height="131.4" fill="#f4f4f4"/>
<rect x="859.1" y="478" width="98" height="65" fill="#c6c616"/>
<rect x="859.1" y="543" width="98" height="64.4" fill="#c2c000"/>
<text x="908.1" y="624.0" font-size="12.5" fill="#f2f2f2" text-anchor="middle">100%</text>
<text transform="translate(388.5 505.7) rotate(-90)" font-size="12.5" fill="#f2f2f2" text-anchor="middle">Actual</text>
<text transform="translate(388.5 580.7) rotate(-90)" font-size="12.5" fill="#f2f2f2" text-anchor="middle">Target</text>
<rect x="973.4" y="88" width="694" height="558" fill="#1b1b1b"/>
<rect x="980" y="95" width="681" height="544.6" fill="#333333"/>
<rect x="1661" y="88" width="6" height="558" fill="#1b1b1b"/>
<rect x="1664" y="37" width="3" height="890" fill="#000" opacity="0.22"/>
<text x="1320.0" y="112.6" font-size="14.3" fill="#d0d0d0" text-anchor="middle" textLength="83.0" lengthAdjust="spacingAndGlyphs">CIE 1976 u'v'</text>
<rect x="1017.9" y="118.5" width="639.3" height="491.3" fill="#232323"/>
<clipPath id="plotclip"><rect x="1017.9" y="118.5" width="639.3" height="491.3"/></clipPath>
<rect x="1017.9" y="118.5" width="639.3" height="491.3" fill="none" stroke="#9a9a9a" stroke-width="1.5"/>
<line x1="1011.9" y1="609.8" x2="1017.9" y2="609.8" stroke="#bdbdbd" stroke-width="1.5"/>
<text x="1011.0" y="615.0" font-size="14.3" fill="#d0d0d0" text-anchor="end">0</text>
<line x1="1011.9" y1="568.9" x2="1017.9" y2="568.9" stroke="#bdbdbd" stroke-width="1.5"/>
<text x="1011.0" y="574.1" font-size="14.3" fill="#d0d0d0" text-anchor="end">0,05</text>
<line x1="1011.9" y1="527.9" x2="1017.9" y2="527.9" stroke="#bdbdbd" stroke-width="1.5"/>
<text x="1011.0" y="533.1" font-size="14.3" fill="#d0d0d0" text-anchor="end">0,1</text>
<line x1="1011.9" y1="487.0" x2="1017.9" y2="487.0" stroke="#bdbdbd" stroke-width="1.5"/>
<text x="1011.0" y="492.2" font-size="14.3" fill="#d0d0d0" text-anchor="end">0,15</text>
<line x1="1011.9" y1="446.0" x2="1017.9" y2="446.0" stroke="#bdbdbd" stroke-width="1.5"/>
<text x="1011.0" y="451.2" font-size="14.3" fill="#d0d0d0" text-anchor="end">0,2</text>
<line x1="1011.9" y1="405.1" x2="1017.9" y2="405.1" stroke="#bdbdbd" stroke-width="1.5"/>
<text x="1011.0" y="410.3" font-size="14.3" fill="#d0d0d0" text-anchor="end">0,25</text>
<line x1="1011.9" y1="364.1" x2="1017.9" y2="364.1" stroke="#bdbdbd" stroke-width="1.5"/>
<text x="1011.0" y="369.3" font-size="14.3" fill="#d0d0d0" text-anchor="end">0,3</text>
<line x1="1011.9" y1="323.2" x2="1017.9" y2="323.2" stroke="#bdbdbd" stroke-width="1.5"/>
<text x="1011.0" y="328.4" font-size="14.3" fill="#d0d0d0" text-anchor="end">0,35</text>
<line x1="1011.9" y1="282.2" x2="1017.9" y2="282.2" stroke="#bdbdbd" stroke-width="1.5"/>
<text x="1011.0" y="287.4" font-size="14.3" fill="#d0d0d0" text-anchor="end">0,4</text>
<line x1="1011.9" y1="241.3" x2="1017.9" y2="241.3" stroke="#bdbdbd" stroke-width="1.5"/>
<text x="1011.0" y="246.5" font-size="14.3" fill="#d0d0d0" text-anchor="end">0,45</text>
<line x1="1011.9" y1="200.3" x2="1017.9" y2="200.3" stroke="#bdbdbd" stroke-width="1.5"/>
<text x="1011.0" y="205.5" font-size="14.3" fill="#d0d0d0" text-anchor="end">0,5</text>
<line x1="1011.9" y1="159.4" x2="1017.9" y2="159.4" stroke="#bdbdbd" stroke-width="1.5"/>
<text x="1011.0" y="164.6" font-size="14.3" fill="#d0d0d0" text-anchor="end">0,55</text>
<line x1="1017.9" y1="609.8" x2="1017.9" y2="615.3" stroke="#bdbdbd" stroke-width="1.5"/>
<text x="1017.9" y="631.6" font-size="14.3" fill="#d0d0d0" text-anchor="middle">0</text>
<line x1="1071.1" y1="609.8" x2="1071.1" y2="615.3" stroke="#bdbdbd" stroke-width="1.5"/>
<text x="1071.1" y="631.6" font-size="14.3" fill="#d0d0d0" text-anchor="middle">0,05</text>
<line x1="1124.3" y1="609.8" x2="1124.3" y2="615.3" stroke="#bdbdbd" stroke-width="1.5"/>
<text x="1124.3" y="631.6" font-size="14.3" fill="#d0d0d0" text-anchor="middle">0,1</text>
<line x1="1177.6" y1="609.8" x2="1177.6" y2="615.3" stroke="#bdbdbd" stroke-width="1.5"/>
<text x="1177.6" y="631.6" font-size="14.3" fill="#d0d0d0" text-anchor="middle">0,15</text>
<line x1="1230.8" y1="609.8" x2="1230.8" y2="615.3" stroke="#bdbdbd" stroke-width="1.5"/>
<text x="1230.8" y="631.6" font-size="14.3" fill="#d0d0d0" text-anchor="middle">0,2</text>
<line x1="1284.0" y1="609.8" x2="1284.0" y2="615.3" stroke="#bdbdbd" stroke-width="1.5"/>
<text x="1284.0" y="631.6" font-size="14.3" fill="#d0d0d0" text-anchor="middle">0,25</text>
<line x1="1337.2" y1="609.8" x2="1337.2" y2="615.3" stroke="#bdbdbd" stroke-width="1.5"/>
<text x="1337.2" y="631.6" font-size="14.3" fill="#d0d0d0" text-anchor="middle">0,3</text>
<line x1="1390.5" y1="609.8" x2="1390.5" y2="615.3" stroke="#bdbdbd" stroke-width="1.5"/>
<text x="1390.5" y="631.6" font-size="14.3" fill="#d0d0d0" text-anchor="middle">0,35</text>
<line x1="1443.7" y1="609.8" x2="1443.7" y2="615.3" stroke="#bdbdbd" stroke-width="1.5"/>
<text x="1443.7" y="631.6" font-size="14.3" fill="#d0d0d0" text-anchor="middle">0,4</text>
<line x1="1496.9" y1="609.8" x2="1496.9" y2="615.3" stroke="#bdbdbd" stroke-width="1.5"/>
<text x="1496.9" y="631.6" font-size="14.3" fill="#d0d0d0" text-anchor="middle">0,45</text>
<line x1="1550.2" y1="609.8" x2="1550.2" y2="615.3" stroke="#bdbdbd" stroke-width="1.5"/>
<text x="1550.2" y="631.6" font-size="14.3" fill="#d0d0d0" text-anchor="middle">0,5</text>
<line x1="1603.4" y1="609.8" x2="1603.4" y2="615.3" stroke="#bdbdbd" stroke-width="1.5"/>
<text x="1603.4" y="631.6" font-size="14.3" fill="#d0d0d0" text-anchor="middle">0,55</text>
<text x="50.2" y="677.4" font-size="29.5" fill="#eeeeee" textLength="232.4" lengthAdjust="spacingAndGlyphs" stroke="#eeeeee" stroke-width="0.4">Avg dE2000: 0,99</text>
<text x="46.5" y="718.3" font-size="29.5" fill="#eeeeee" textLength="241.0" lengthAdjust="spacingAndGlyphs" stroke="#eeeeee" stroke-width="0.4">Max dE2000: 2,37</text>
<text x="14.9" y="767.2" font-size="29.5" fill="#eeeeee" textLength="218.3" lengthAdjust="spacingAndGlyphs" stroke="#eeeeee" stroke-width="0.4">Current Reading</text>
<text x="14.9" y="802.0" font-size="26.0" fill="#eeeeee" textLength="101.1" lengthAdjust="spacingAndGlyphs" stroke="#eeeeee" stroke-width="0.4">x: 0,4177</text>
<text x="170.3" y="802.0" font-size="26.0" fill="#eeeeee" textLength="103.0" lengthAdjust="spacingAndGlyphs" stroke="#eeeeee" stroke-width="0.4">y: 0,5027</text>
<text x="14.9" y="842.5" font-size="26.0" fill="#eeeeee" textLength="95.9" lengthAdjust="spacingAndGlyphs" stroke="#eeeeee" stroke-width="0.4">fL: 62,59</text>
<text x="14.9" y="876.6" font-size="26.0" fill="#eeeeee" textLength="158.8" lengthAdjust="spacingAndGlyphs" stroke="#eeeeee" stroke-width="0.4">cd/m²: 214,46</text>
<text x="466.3" y="680.4" font-size="13.8" fill="#d0d0d0" text-anchor="middle" textLength="81.7" lengthAdjust="spacingAndGlyphs">RGB Balance</text>
<rect x="356.9" y="684.7" width="249.4" height="180.1" fill="#232323"/>
<line x1="356.9" y1="703.0" x2="606.3" y2="703.0" stroke="#8c8c8c" stroke-width="1.5"/>
<line x1="350.9" y1="703.0" x2="356.9" y2="703.0" stroke="#bdbdbd" stroke-width="1.5"/>
<text x="350.3" y="708.4" font-size="14.3" fill="#d0d0d0" text-anchor="end">104</text>
<line x1="356.9" y1="740.1" x2="606.3" y2="740.1" stroke="#8c8c8c" stroke-width="1.5"/>
<line x1="350.9" y1="740.1" x2="356.9" y2="740.1" stroke="#bdbdbd" stroke-width="1.5"/>
<text x="350.3" y="745.5" font-size="14.3" fill="#d0d0d0" text-anchor="end">102</text>
<line x1="356.9" y1="776.2" x2="606.3" y2="776.2" stroke="#8c8c8c" stroke-width="1.5"/>
<line x1="350.9" y1="776.2" x2="356.9" y2="776.2" stroke="#bdbdbd" stroke-width="1.5"/>
<text x="350.3" y="781.6" font-size="14.3" fill="#d0d0d0" text-anchor="end">100</text>
<line x1="356.9" y1="812.1" x2="606.3" y2="812.1" stroke="#8c8c8c" stroke-width="1.5"/>
<line x1="350.9" y1="812.1" x2="356.9" y2="812.1" stroke="#bdbdbd" stroke-width="1.5"/>
<text x="350.3" y="817.5" font-size="14.3" fill="#d0d0d0" text-anchor="end">98</text>
<line x1="356.9" y1="848.0" x2="606.3" y2="848.0" stroke="#8c8c8c" stroke-width="1.5"/>
<line x1="350.9" y1="848.0" x2="356.9" y2="848.0" stroke="#bdbdbd" stroke-width="1.5"/>
<text x="350.3" y="853.4" font-size="14.3" fill="#d0d0d0" text-anchor="end">96</text>
<path d="M356.9 864.8 V684.7 H606.3 V864.8" fill="none" stroke="#9a9a9a" stroke-width="1.5"/>
<rect x="380.4" y="759.0" width="66.9" height="106" fill="#000"/>
<rect x="381.9" y="760.5" width="64.2" height="104.5" fill="url(#rbar)"/>
<rect x="446.6" y="759.0" width="66.5" height="106" fill="#000"/>
<rect x="448.1" y="760.5" width="64.0" height="104.5" fill="url(#gbar)"/>
<rect x="513.6" y="696.0" width="66.9" height="169" fill="#000"/>
<rect x="515.1" y="697.5" width="64.2" height="167.5" fill="url(#bbar)"/>
<line x1="356.9" y1="864.8" x2="606.3" y2="864.8" stroke="#9a9a9a" stroke-width="1.5"/>
<line x1="356.9" y1="864.8" x2="356.9" y2="870.3" stroke="#bdbdbd" stroke-width="1.5"/>
<line x1="606.3" y1="864.8" x2="606.3" y2="870.3" stroke="#bdbdbd" stroke-width="1.5"/>
<text x="481.9" y="882.0" font-size="13.8" fill="#d0d0d0" text-anchor="middle">100%</text>
<rect x="627.0" y="653.2" width="730.0" height="235.1" fill="#000"/>
<rect x="629.0" y="654.4" width="726.0" height="13.8" fill="#2e2e2e"/>
<rect x="629.0" y="668.2" width="726.0" height="14.4" fill="#121212"/>
<text x="856.8" y="674.4" font-size="15.2" fill="#f4f4f4" font-weight="bold" textLength="39.4" lengthAdjust="spacingAndGlyphs">20%</text>
<text x="963.4" y="674.4" font-size="15.2" fill="#f4f4f4" font-weight="bold" textLength="39.4" lengthAdjust="spacingAndGlyphs">40%</text>
<text x="1070.1" y="674.4" font-size="15.2" fill="#f4f4f4" font-weight="bold" textLength="39.4" lengthAdjust="spacingAndGlyphs">60%</text>
<text x="1176.6" y="674.4" font-size="15.2" fill="#f4f4f4" font-weight="bold" textLength="39.4" lengthAdjust="spacingAndGlyphs">80%</text>
<text x="1276.3" y="674.4" font-size="15.2" fill="#f4f4f4" font-weight="bold" textLength="51.2" lengthAdjust="spacingAndGlyphs">100%</text>
<rect x="629.0" y="682.60" width="726.0" height="25.71" fill="#414141"/>
<rect x="629.0" y="708.31" width="726.0" height="25.71" fill="url(#lrow)"/>
<rect x="629.0" y="734.02" width="726.0" height="25.71" fill="#414141"/>
<rect x="629.0" y="759.74" width="726.0" height="25.71" fill="url(#lrow)"/>
<rect x="629.0" y="785.45" width="726.0" height="25.71" fill="#414141"/>
<rect x="629.0" y="811.16" width="726.0" height="25.71" fill="url(#lrow)"/>
<rect x="629.0" y="836.88" width="726.0" height="25.71" fill="#414141"/>
<rect x="629.0" y="862.59" width="726.0" height="25.71" fill="url(#lrow)"/>
<text x="645.8" y="701.8" font-size="15.2" fill="#f2f2f2" font-weight="bold" textLength="86.8" lengthAdjust="spacingAndGlyphs">x: CIE31</text>
<text x="828.7" y="701.8" font-size="15.6" fill="#f2f2f2" textLength="67.5" lengthAdjust="spacingAndGlyphs">0,3332</text>
<text x="935.3" y="701.8" font-size="15.6" fill="#f2f2f2" textLength="67.5" lengthAdjust="spacingAndGlyphs">0,3533</text>
<text x="1042.0" y="701.8" font-size="15.6" fill="#f2f2f2" textLength="67.5" lengthAdjust="spacingAndGlyphs">0,3755</text>
<text x="1148.5" y="701.8" font-size="15.6" fill="#f2f2f2" textLength="67.5" lengthAdjust="spacingAndGlyphs">0,3962</text>
<text x="1254.6" y="701.8" font-size="15.6" fill="#f2f2f2" textLength="67.5" lengthAdjust="spacingAndGlyphs">0,4177</text>
<text x="645.8" y="727.5" font-size="15.2" fill="#f2f2f2" font-weight="bold" textLength="86.3" lengthAdjust="spacingAndGlyphs">y: CIE31</text>
<text x="828.7" y="727.5" font-size="15.6" fill="#f2f2f2" textLength="67.5" lengthAdjust="spacingAndGlyphs">0,3639</text>
<text x="935.3" y="727.5" font-size="15.6" fill="#f2f2f2" textLength="67.5" lengthAdjust="spacingAndGlyphs">0,3970</text>
<text x="1042.0" y="727.5" font-size="15.6" fill="#f2f2f2" textLength="67.5" lengthAdjust="spacingAndGlyphs">0,4333</text>
<text x="1148.5" y="727.5" font-size="15.6" fill="#f2f2f2" textLength="67.5" lengthAdjust="spacingAndGlyphs">0,4674</text>
<text x="1254.6" y="727.5" font-size="15.6" fill="#f2f2f2" textLength="67.5" lengthAdjust="spacingAndGlyphs">0,5027</text>
<text x="645.8" y="753.2" font-size="15.2" fill="#f2f2f2" font-weight="bold" textLength="14.5" lengthAdjust="spacingAndGlyphs">Y</text>
<text x="828.7" y="753.2" font-size="15.6" fill="#f2f2f2" textLength="93.8" lengthAdjust="spacingAndGlyphs">226,9042</text>
<text x="935.3" y="753.2" font-size="15.6" fill="#f2f2f2" textLength="93.8" lengthAdjust="spacingAndGlyphs">223,1060</text>
<text x="1042.0" y="753.2" font-size="15.6" fill="#f2f2f2" textLength="93.8" lengthAdjust="spacingAndGlyphs">219,5324</text>
<text x="1148.5" y="753.2" font-size="15.6" fill="#f2f2f2" textLength="93.8" lengthAdjust="spacingAndGlyphs">216,6406</text>
<text x="1254.6" y="753.2" font-size="15.6" fill="#f2f2f2" textLength="93.8" lengthAdjust="spacingAndGlyphs">214,4583</text>
<text x="645.8" y="778.9" font-size="15.2" fill="#f2f2f2" font-weight="bold" textLength="157.2" lengthAdjust="spacingAndGlyphs">Target x:CIE31</text>
<text x="828.7" y="778.9" font-size="15.6" fill="#f2f2f2" textLength="67.5" lengthAdjust="spacingAndGlyphs">0,3344</text>
<text x="935.3" y="778.9" font-size="15.6" fill="#f2f2f2" textLength="67.5" lengthAdjust="spacingAndGlyphs">0,3564</text>
<text x="1042.0" y="778.9" font-size="15.6" fill="#f2f2f2" textLength="67.5" lengthAdjust="spacingAndGlyphs">0,3773</text>
<text x="1148.5" y="778.9" font-size="15.6" fill="#f2f2f2" textLength="67.5" lengthAdjust="spacingAndGlyphs">0,3969</text>
<text x="1254.6" y="778.9" font-size="15.6" fill="#f2f2f2" textLength="67.5" lengthAdjust="spacingAndGlyphs">0,4193</text>
<text x="645.8" y="804.7" font-size="15.2" fill="#f2f2f2" font-weight="bold" textLength="156.1" lengthAdjust="spacingAndGlyphs">Target y:CIE31</text>
<text x="828.7" y="804.7" font-size="15.6" fill="#f2f2f2" textLength="67.5" lengthAdjust="spacingAndGlyphs">0,3648</text>
<text x="935.3" y="804.7" font-size="15.6" fill="#f2f2f2" textLength="67.5" lengthAdjust="spacingAndGlyphs">0,4013</text>
<text x="1042.0" y="804.7" font-size="15.6" fill="#f2f2f2" textLength="67.5" lengthAdjust="spacingAndGlyphs">0,4358</text>
<text x="1148.5" y="804.7" font-size="15.6" fill="#f2f2f2" textLength="67.5" lengthAdjust="spacingAndGlyphs">0,4682</text>
<text x="1254.6" y="804.7" font-size="15.6" fill="#f2f2f2" textLength="67.5" lengthAdjust="spacingAndGlyphs">0,5053</text>
<text x="645.8" y="830.4" font-size="15.2" fill="#f2f2f2" font-weight="bold" textLength="92.0" lengthAdjust="spacingAndGlyphs">Target Y</text>
<text x="828.7" y="830.4" font-size="15.6" fill="#f2f2f2" textLength="93.8" lengthAdjust="spacingAndGlyphs">219,6017</text>
<text x="935.3" y="830.4" font-size="15.6" fill="#f2f2f2" textLength="93.8" lengthAdjust="spacingAndGlyphs">215,7470</text>
<text x="1042.0" y="830.4" font-size="15.6" fill="#f2f2f2" textLength="93.8" lengthAdjust="spacingAndGlyphs">212,7853</text>
<text x="1148.5" y="830.4" font-size="15.6" fill="#f2f2f2" textLength="93.8" lengthAdjust="spacingAndGlyphs">210,4609</text>
<text x="1254.6" y="830.4" font-size="15.6" fill="#f2f2f2" textLength="93.8" lengthAdjust="spacingAndGlyphs">208,2137</text>
<text x="645.8" y="856.1" font-size="15.2" fill="#f2f2f2" font-weight="bold" textLength="90.2" lengthAdjust="spacingAndGlyphs">ΔE 2000</text>
<text x="828.7" y="856.1" font-size="15.6" fill="#f2f2f2" textLength="67.5" lengthAdjust="spacingAndGlyphs">0,7892</text>
<text x="935.3" y="856.1" font-size="15.6" fill="#f2f2f2" textLength="67.5" lengthAdjust="spacingAndGlyphs">1,0070</text>
<text x="1042.0" y="856.1" font-size="15.6" fill="#f2f2f2" textLength="67.5" lengthAdjust="spacingAndGlyphs">0,7332</text>
<text x="1148.5" y="856.1" font-size="15.6" fill="#f2f2f2" textLength="67.5" lengthAdjust="spacingAndGlyphs">0,6456</text>
<text x="1254.6" y="856.1" font-size="15.6" fill="#f2f2f2" textLength="67.5" lengthAdjust="spacingAndGlyphs">0,6913</text>
<text x="645.8" y="881.8" font-size="15.2" fill="#f2f2f2" font-weight="bold" textLength="72.3" lengthAdjust="spacingAndGlyphs">ΔE ITP</text>
<text x="828.7" y="881.8" font-size="15.6" fill="#f2f2f2" textLength="67.5" lengthAdjust="spacingAndGlyphs">2,5609</text>
<text x="935.3" y="881.8" font-size="15.6" fill="#f2f2f2" textLength="67.5" lengthAdjust="spacingAndGlyphs">3,3752</text>
<text x="1042.0" y="881.8" font-size="15.6" fill="#f2f2f2" textLength="67.5" lengthAdjust="spacingAndGlyphs">2,7253</text>
<text x="1148.5" y="881.8" font-size="15.6" fill="#f2f2f2" textLength="67.5" lengthAdjust="spacingAndGlyphs">2,2270</text>
<text x="1254.6" y="881.8" font-size="15.6" fill="#f2f2f2" textLength="67.5" lengthAdjust="spacingAndGlyphs">2,9633</text>
<rect x="0" y="927" width="1667" height="78" fill="#2b2b2b"/>
<rect x="1011" y="927" width="253" height="78" fill="url(#fdark)"/>
<rect x="1" y="928.8" width="55" height="76" rx="5" fill="url(#btng)"/>
<circle cx="28.3" cy="940" r="9.5" fill="url(#circg)"/>
<path d="M22.6 943.2 H34 L28.3 937.2 Z" fill="#222"/>
<rect x="6.5" y="961.2" width="43.7" height="37.2" rx="5" fill="#ffff00" stroke="#b8b800" stroke-width="1"/>
<rect x="64" y="928.8" width="187" height="76" rx="5" fill="url(#btng)"/>
<rect x="70.8" y="935.2" width="174" height="44.6" rx="4" fill="#c3c4a5" stroke="#9c9c70" stroke-width="0.8"/>
<rect x="71.5" y="935.6" width="172.6" height="2" rx="1" fill="#000" opacity="0.12"/>
<text x="157.5" y="999.0" font-size="13.5" fill="#2e2e2e" text-anchor="middle" font-weight="bold">20%</text>
<rect x="254" y="928.8" width="187" height="76" rx="5" fill="url(#btng)"/>
<rect x="260.8" y="935.2" width="174" height="44.6" rx="4" fill="#c4c48a" stroke="#9c9c70" stroke-width="0.8"/>
<rect x="261.5" y="935.6" width="172.6" height="2" rx="1" fill="#000" opacity="0.12"/>
<text x="347.5" y="999.0" font-size="13.5" fill="#2e2e2e" text-anchor="middle" font-weight="bold">40%</text>
<rect x="444" y="928.8" width="187" height="76" rx="5" fill="url(#btng)"/>
<rect x="450.8" y="935.2" width="174" height="44.6" rx="4" fill="#c3c36c" stroke="#9c9c70" stroke-width="0.8"/>
<rect x="451.5" y="935.6" width="172.6" height="2" rx="1" fill="#000" opacity="0.12"/>
<text x="537.5" y="999.0" font-size="13.5" fill="#2e2e2e" text-anchor="middle" font-weight="bold">60%</text>
<rect x="634" y="928.8" width="187" height="76" rx="5" fill="url(#btng)"/>
<rect x="640.8" y="935.2" width="174" height="44.6" rx="4" fill="#c3c34e" stroke="#9c9c70" stroke-width="0.8"/>
<rect x="641.5" y="935.6" width="172.6" height="2" rx="1" fill="#000" opacity="0.12"/>
<text x="727.5" y="999.0" font-size="13.5" fill="#2e2e2e" text-anchor="middle" font-weight="bold">80%</text>
<rect x="824.3" y="929.3" width="187" height="75.5" rx="5" fill="url(#selg)"/>
<rect x="830" y="934.4" width="175.7" height="45.7" rx="5" fill="#c3c000"/>
<text x="917.9" y="999.0" font-size="13.5" fill="#f4f4f4" text-anchor="middle" font-weight="bold">100%</text>
<rect x="1265.1" y="928.2" width="60.2" height="90" rx="5" fill="url(#btng2)"/>
<line x1="1265.1" y1="951.3" x2="1325.3" y2="951.3" stroke="#555" stroke-width="1"/>
<circle cx="1295.4" cy="939.9" r="9.2" fill="url(#circg)"/>
<path d="M1290.2 941.8 H1301 L1295.6 936.2 Z" fill="#333"/>
<rect x="1277.4" y="960.8" width="35.4" height="34.8" rx="5" fill="#bcbcbc" stroke="#161616" stroke-width="3"/>
<rect x="1286.9" y="970" width="17.1" height="17.1" fill="#111"/>
<rect x="1279" y="978.4" width="32.2" height="15.6" rx="3" fill="#000" opacity="0.16"/>
<rect x="1326.3" y="928.2" width="57.5" height="38.2" fill="url(#btng2)"/>
<rect x="1384.9" y="928.2" width="54.9" height="38.2" fill="url(#btng2)"/>
<rect x="1440.9" y="928.2" width="55.3" height="38.2" fill="url(#btng2)"/>
<rect x="1497.3" y="928.2" width="55.2" height="38.2" fill="url(#btng2)"/>
<rect x="1553.6" y="928.2" width="55.1" height="38.2" fill="url(#btng2)"/>
<rect x="1609.8" y="928.2" width="56.1" height="38.2" fill="url(#btng2)"/>
<circle cx="1355" cy="947" r="12.2" fill="url(#circg)"/>
<circle cx="1412.5" cy="947" r="12.2" fill="url(#circg)"/>
<circle cx="1468.8" cy="947" r="12.2" fill="url(#circg)"/>
<circle cx="1525" cy="947" r="12.2" fill="url(#circg)"/>
<circle cx="1581" cy="947" r="12.2" fill="url(#circg)"/>
<circle cx="1638.8" cy="947" r="12.2" fill="url(#circg)"/>
<rect x="1350.4" y="942.4" width="9.8" height="9.4" fill="#2e2e2e"/>
<path d="M1408.6 940.6 L1418 947.6 L1408.6 954.2 Z" fill="#2e2e2e"/>
<path d="M1463.5 941.6 V952.6 M1474 941.6 V952.6 M1463.5 941.6 H1465.6 M1463.5 952.6 H1465.6 M1474 941.6 H1471.9 M1474 952.6 H1471.9" stroke="#2e2e2e" stroke-width="2.4" fill="none"/>
<circle cx="1467.3" cy="947.3" r="1" fill="#2e2e2e"/><circle cx="1470.5" cy="947.3" r="1" fill="#2e2e2e"/>
<path d="M1525 947 C1522 943.5 1518 943.5 1518 947 C1518 950.5 1522 950.5 1525 947 C1528 943.5 1532 943.5 1532 947 C1532 950.5 1528 950.5 1525 947 Z" stroke="#2e2e2e" stroke-width="1.8" fill="none"/>
<path d="M1575.6 945.6 A5.6 5.6 0 0 1 1585.6 943.6 M1586.4 948.4 A5.6 5.6 0 0 1 1576.4 950.4" stroke="#2e2e2e" stroke-width="2" fill="none"/>
<path d="M1583.4 941.4 L1587.4 944.6 L1583 945.6 Z M1578.6 952.6 L1574.6 949.4 L1579 948.4 Z" fill="#2e2e2e"/>
<rect x="1326.3" y="967.4" width="169.6" height="40" fill="url(#btng3)"/>
<rect x="1497.3" y="967.4" width="169.7" height="40" fill="url(#btng3)"/>
<circle cx="1365.2" cy="985.8" r="12" fill="url(#circg)"/>
<circle cx="1631.2" cy="985.8" r="12" fill="url(#circg)"/>
<path d="M1364.2 980.3 L1359.2 985.8 L1364.2 991.3 M1369.4 980.3 L1364.4 985.8 L1369.4 991.3" stroke="#333" stroke-width="1.8" fill="none"/>
<path d="M1627.2 980.3 L1632.2 985.8 L1627.2 991.3 M1632.4 980.3 L1637.4 985.8 L1632.4 991.3" stroke="#333" stroke-width="1.8" fill="none"/>
<text x="1398.8" y="995.6" font-size="26.5" fill="#333333" textLength="62.5" lengthAdjust="spacingAndGlyphs" stroke="#333" stroke-width="0.9">Back</text>
<text x="1532.5" y="995.6" font-size="26.5" fill="#333333" textLength="63.8" lengthAdjust="spacingAndGlyphs" stroke="#333" stroke-width="0.9">Next</text>
</svg>
<div style="position:absolute;left:1017.9px;top:118.5px;width:639.3px;height:491.3px;overflow:hidden">
<div style="position:absolute;left:0;top:0;width:100%;height:100%;clip-path:polygon(273.4px 477.7px,273.0px 478.0px,272.2px 478.3px,271.0px 478.3px,268.5px 477.5px,262.0px 472.8px,249.8px 462.6px,241.2px 455.5px,230.0px 446.3px,216.5px 435.0px,199.8px 420.0px,179.9px 399.6px,153.4px 367.7px,122.1px 323.9px,88.2px 269.5px,55.5px 210.7px,30.0px 154.2px,12.7px 106.5px,3.7px 71.2px,1.5px 46.5px,4.9px 29.6px,13.1px 18.8px,24.6px 13.3px,38.3px 11.3px,53.3px 10.8px,68.5px 11.0px,84.3px 11.7px,101.4px 13.0px,120.0px 14.6px,140.4px 16.7px,163.0px 19.1px,188.0px 21.9px,215.7px 25.0px,246.1px 28.5px,279.3px 32.4px,315.0px 36.5px,352.9px 40.8px,391.8px 45.3px,429.5px 49.6px,499.4px 57.6px,553.8px 63.9px,592.4px 68.3px,620.6px 71.6px,639.2px 73.7px,650.3px 75.0px,659.9px 76.1px,663.6px 76.5px);background:conic-gradient(from 0deg at 210.6px 107.8px,rgb(136, 153, 0) -1.2deg,rgb(140, 153, 0) 0.3deg,rgb(144, 153, 0) 1.9deg,rgb(148, 153, 0) 3.5deg,rgb(153, 153, 0) 5.3deg,rgb(153, 149, 0) 7.1deg,rgb(153, 145, 0) 8.8deg,rgb(153, 141, 0) 10.6deg,rgb(153, 137, 0) 12.3deg,rgb(153, 133, 0) 14.1deg,rgb(153, 130, 0) 15.8deg,rgb(153, 127, 0) 17.5deg,rgb(153, 123, 0) 19.2deg,rgb(153, 120, 0) 20.9deg,rgb(153, 117, 0) 22.5deg,rgb(153, 114, 0) 24.1deg,rgb(153, 111, 0) 25.9deg,rgb(153, 108, 0) 27.6deg,rgb(153, 106, 0) 29.2deg,rgb(153, 103, 0) 30.8deg,rgb(153, 100, 0) 32.4deg,rgb(153, 98, 0) 34.0deg,rgb(153, 95, 0) 35.5deg,rgb(153, 93, 0) 36.9deg,rgb(153, 91, 0) 38.3deg,rgb(153, 89, 0) 39.7deg,rgb(153, 86, 0) 41.0deg,rgb(153, 84, 0) 42.3deg,rgb(153, 82, 0) 43.7deg,rgb(153, 80, 0) 45.0deg,rgb(153, 78, 0) 46.2deg,rgb(153, 76, 0) 47.4deg,rgb(153, 74, 0) 48.6deg,rgb(153, 72, 0) 49.7deg,rgb(153, 70, 0) 50.8deg,rgb(153, 69, 0) 51.9deg,rgb(153, 67, 0) 52.9deg,rgb(153, 65, 0) 53.8deg,rgb(153, 64, 0) 54.8deg,rgb(153, 62, 0) 55.7deg,rgb(153, 60, 0) 56.6deg,rgb(153, 59, 0) 57.5deg,rgb(153, 57, 0) 58.3deg,rgb(153, 56, 0) 59.2deg,rgb(153, 54, 0) 60.0deg,rgb(153, 53, 0) 60.7deg,rgb(153, 51, 0) 61.5deg,rgb(153, 50, 0) 62.2deg,rgb(153, 49, 0) 62.9deg,rgb(153, 47, 0) 63.5deg,rgb(153, 46, 0) 64.2deg,rgb(153, 45, 0) 64.8deg,rgb(153, 43, 0) 65.4deg,rgb(153, 42, 0) 66.0deg,rgb(153, 41, 0) 66.6deg,rgb(153, 40, 0) 67.1deg,rgb(153, 38, 0) 67.7deg,rgb(153, 37, 0) 68.2deg,rgb(153, 36, 0) 68.7deg,rgb(153, 35, 0) 69.2deg,rgb(153, 34, 0) 69.6deg,rgb(153, 33, 0) 70.1deg,rgb(153, 32, 0) 70.5deg,rgb(153, 31, 0) 71.0deg,rgb(153, 30, 0) 71.4deg,rgb(153, 29, 0) 71.8deg,rgb(153, 28, 0) 72.1deg,rgb(153, 27, 0) 72.5deg,rgb(153, 26, 0) 72.9deg,rgb(153, 25, 0) 73.2deg,rgb(153, 24, 0) 73.6deg,rgb(153, 23, 0) 73.9deg,rgb(153, 22, 0) 74.2deg,rgb(153, 21, 0) 74.5deg,rgb(153, 20, 0) 74.8deg,rgb(153, 19, 0) 75.1deg,rgb(153, 17, 0) 75.6deg,rgb(153, 16, 0) 76.2deg,rgb(153, 14, 0) 76.6deg,rgb(153, 12, 0) 77.1deg,rgb(153, 11, 0) 77.5deg,rgb(153, 9, 0) 78.0deg,rgb(153, 7, 0) 78.4deg,rgb(153, 6, 0) 78.7deg,rgb(153, 4, 0) 79.1deg,rgb(153, 2, 0) 79.5deg,rgb(153, 0, 0) 79.8deg,rgb(153, 0, 0) 80.1deg,rgb(153, 0, 0) 80.4deg,rgb(153, 0, 0) 80.6deg,rgb(153, 0, 0) 80.9deg,rgb(153, 0, 0) 81.1deg,rgb(153, 0, 0) 81.3deg,rgb(153, 0, 0) 81.5deg,rgb(153, 0, 0) 81.7deg,rgb(153, 0, 0) 82.0deg,rgb(153, 0, 0) 82.1deg,rgb(153, 0, 0) 82.3deg,rgb(153, 0, 0) 82.5deg,rgb(153, 0, 0) 82.7deg,rgb(153, 0, 0) 82.8deg,rgb(153, 0, 0) 83.0deg,rgb(153, 0, 0) 83.1deg,rgb(153, 0, 0) 83.2deg,rgb(153, 0, 0) 83.3deg,rgb(153, 0, 0) 83.4deg,rgb(153, 0, 0) 83.6deg,rgb(153, 0, 0) 83.7deg,rgb(153, 0, 0) 83.8deg,rgb(153, 0, 0) 83.9deg,rgb(153, 0, 0) 84.0deg,rgb(153, 0, 0) 84.1deg,rgb(153, 0, 0) 84.2deg,rgb(153, 0, 0) 84.3deg,rgb(153, 0, 0) 84.3deg,rgb(153, 0, 0) 84.4deg,rgb(153, 0, 0) 84.5deg,rgb(153, 0, 0) 84.5deg,rgb(153, 0, 0) 84.6deg,rgb(153, 0, 0) 84.7deg,rgb(153, 0, 0) 84.8deg,rgb(153, 0, 0) 84.8deg,rgb(153, 0, 0) 84.9deg,rgb(153, 0, 0) 85.0deg,rgb(153, 0, 0) 85.0deg,rgb(153, 0, 0) 85.0deg,rgb(153, 0, 0) 85.1deg,rgb(153, 0, 0) 85.1deg,rgb(153, 0, 0) 85.2deg,rgb(153, 0, 0) 85.2deg,rgb(153, 0, 0) 85.3deg,rgb(153, 0, 0) 85.3deg,rgb(153, 0, 0) 85.3deg,rgb(153, 0, 0) 85.4deg,rgb(153, 0, 0) 85.4deg,rgb(153, 0, 0) 85.5deg,rgb(153, 0, 0) 85.5deg,rgb(153, 0, 0) 85.5deg,rgb(153, 0, 0) 85.5deg,rgb(153, 0, 0) 85.5deg,rgb(153, 0, 0) 85.6deg,rgb(153, 0, 0) 85.6deg,rgb(153, 0, 0) 85.6deg,rgb(153, 0, 0) 85.6deg,rgb(153, 0, 0) 85.7deg,rgb(153, 0, 0) 85.7deg,rgb(153, 0, 0) 85.7deg,rgb(153, 0, 0) 85.7deg,rgb(153, 0, 0) 85.8deg,rgb(153, 0, 0) 85.8deg,rgb(153, 0, 0) 85.8deg,rgb(153, 0, 0) 85.8deg,rgb(153, 0, 0) 85.8deg,rgb(153, 0, 0) 85.8deg,rgb(153, 0, 0) 85.9deg,rgb(153, 0, 0) 85.9deg,rgb(153, 0, 0) 85.9deg,rgb(153, 0, 0) 85.9deg,rgb(153, 0, 0) 85.9deg,rgb(153, 0, 0) 86.0deg,rgb(153, 0, 0) 86.0deg,rgb(153, 0, 0) 86.0deg,rgb(153, 0, 0) 86.0deg,rgb(153, 0, 0) 86.0deg,rgb(153, 0, 0) 86.0deg,rgb(153, 0, 0) 86.0deg,rgb(153, 0, 0) 86.0deg,rgb(153, 0, 0) 86.0deg,rgb(153, 0, 0) 86.0deg,rgb(153, 0, 0) 86.0deg,rgb(153, 0, 0) 86.0deg,rgb(153, 0, 0) 86.1deg,rgb(153, 0, 19) 90.3deg,rgb(153, 0, 35) 95.2deg,rgb(153, 0, 51) 101.0deg,rgb(153, 0, 70) 107.6deg,rgb(153, 0, 90) 115.1deg,rgb(153, 0, 114) 123.3deg,rgb(153, 0, 142) 132.0deg,rgb(131, 0, 153) 140.8deg,rgb(104, 0, 153) 149.3deg,rgb(80, 0, 153) 157.1deg,rgb(59, 0, 153) 164.2deg,rgb(39, 0, 153) 170.4deg,rgb(39, 0, 153) 170.4deg,rgb(39, 0, 153) 170.4deg,rgb(39, 0, 153) 170.4deg,rgb(39, 0, 153) 170.4deg,rgb(39, 0, 153) 170.4deg,rgb(39, 0, 153) 170.4deg,rgb(39, 0, 153) 170.4deg,rgb(39, 0, 153) 170.4deg,rgb(39, 0, 153) 170.4deg,rgb(39, 0, 153) 170.4deg,rgb(39, 0, 153) 170.4deg,rgb(39, 0, 153) 170.4deg,rgb(39, 0, 153) 170.4deg,rgb(39, 0, 153) 170.5deg,rgb(39, 0, 153) 170.5deg,rgb(39, 0, 153) 170.5deg,rgb(39, 0, 153) 170.5deg,rgb(39, 0, 153) 170.5deg,rgb(39, 0, 153) 170.5deg,rgb(39, 0, 153) 170.5deg,rgb(39, 0, 153) 170.5deg,rgb(39, 0, 153) 170.5deg,rgb(39, 0, 153) 170.5deg,rgb(39, 0, 153) 170.6deg,rgb(39, 0, 153) 170.6deg,rgb(39, 0, 153) 170.6deg,rgb(39, 0, 153) 170.6deg,rgb(38, 0, 153) 170.6deg,rgb(38, 0, 153) 170.6deg,rgb(38, 0, 153) 170.6deg,rgb(38, 0, 153) 170.7deg,rgb(38, 0, 153) 170.7deg,rgb(38, 0, 153) 170.7deg,rgb(38, 0, 153) 170.7deg,rgb(38, 0, 153) 170.7deg,rgb(38, 0, 153) 170.7deg,rgb(38, 0, 153) 170.8deg,rgb(38, 0, 153) 170.8deg,rgb(38, 0, 153) 170.8deg,rgb(38, 0, 153) 170.9deg,rgb(38, 0, 153) 170.9deg,rgb(38, 0, 153) 170.9deg,rgb(38, 0, 153) 170.9deg,rgb(37, 0, 153) 171.0deg,rgb(37, 0, 153) 171.0deg,rgb(37, 0, 153) 171.0deg,rgb(37, 0, 153) 171.1deg,rgb(37, 0, 153) 171.1deg,rgb(37, 0, 153) 171.2deg,rgb(37, 0, 153) 171.2deg,rgb(37, 0, 153) 171.3deg,rgb(36, 0, 153) 171.4deg,rgb(36, 0, 153) 171.5deg,rgb(36, 0, 153) 171.5deg,rgb(36, 0, 153) 171.6deg,rgb(36, 0, 153) 171.7deg,rgb(35, 0, 153) 171.8deg,rgb(35, 0, 153) 171.8deg,rgb(35, 0, 153) 171.9deg,rgb(35, 0, 153) 172.0deg,rgb(34, 0, 153) 172.1deg,rgb(34, 0, 153) 172.3deg,rgb(34, 0, 153) 172.4deg,rgb(33, 0, 153) 172.5deg,rgb(33, 0, 153) 172.7deg,rgb(33, 0, 153) 172.8deg,rgb(32, 0, 153) 173.0deg,rgb(32, 0, 153) 173.1deg,rgb(32, 0, 153) 173.2deg,rgb(31, 0, 153) 173.4deg,rgb(31, 0, 153) 173.5deg,rgb(30, 0, 153) 173.7deg,rgb(30, 0, 153) 173.8deg,rgb(30, 0, 153) 173.9deg,rgb(30, 0, 153) 174.0deg,rgb(29, 0, 153) 174.1deg,rgb(29, 0, 153) 174.2deg,rgb(29, 0, 153) 174.3deg,rgb(28, 0, 153) 174.4deg,rgb(28, 0, 153) 174.5deg,rgb(28, 0, 153) 174.6deg,rgb(28, 0, 153) 174.7deg,rgb(27, 0, 153) 174.8deg,rgb(27, 0, 153) 175.0deg,rgb(27, 0, 153) 175.1deg,rgb(26, 0, 153) 175.2deg,rgb(26, 0, 153) 175.4deg,rgb(25, 0, 153) 175.5deg,rgb(25, 0, 153) 175.7deg,rgb(25, 0, 153) 175.8deg,rgb(24, 0, 153) 176.0deg,rgb(24, 0, 153) 176.1deg,rgb(23, 0, 153) 176.3deg,rgb(23, 0, 153) 176.4deg,rgb(23, 0, 153) 176.6deg,rgb(22, 0, 153) 176.7deg,rgb(22, 0, 153) 176.9deg,rgb(21, 0, 153) 177.1deg,rgb(21, 0, 153) 177.3deg,rgb(20, 0, 153) 177.4deg,rgb(20, 0, 153) 177.6deg,rgb(19, 0, 153) 177.8deg,rgb(19, 0, 153) 178.0deg,rgb(18, 0, 153) 178.2deg,rgb(17, 0, 153) 178.4deg,rgb(17, 0, 153) 178.6deg,rgb(16, 0, 153) 178.8deg,rgb(16, 0, 153) 179.0deg,rgb(15, 0, 153) 179.2deg,rgb(14, 0, 153) 179.4deg,rgb(13, 0, 153) 179.7deg,rgb(13, 0, 153) 179.9deg,rgb(12, 0, 153) 180.2deg,rgb(11, 0, 153) 180.4deg,rgb(10, 0, 153) 180.7deg,rgb(9, 0, 153) 180.9deg,rgb(9, 0, 153) 181.2deg,rgb(8, 0, 153) 181.4deg,rgb(7, 0, 153) 181.7deg,rgb(6, 0, 153) 182.0deg,rgb(4, 0, 153) 182.3deg,rgb(3, 0, 153) 182.6deg,rgb(1, 0, 153) 182.9deg,rgb(0, 0, 153) 183.3deg,rgb(0, 0, 153) 183.6deg,rgb(0, 0, 153) 183.9deg,rgb(0, 0, 153) 184.3deg,rgb(0, 0, 153) 184.6deg,rgb(0, 0, 153) 184.9deg,rgb(0, 0, 153) 185.3deg,rgb(0, 0, 153) 185.6deg,rgb(0, 0, 153) 186.0deg,rgb(0, 0, 153) 186.5deg,rgb(0, 0, 153) 187.0deg,rgb(0, 0, 153) 187.5deg,rgb(0, 0, 153) 188.0deg,rgb(0, 0, 153) 188.5deg,rgb(0, 2, 153) 189.1deg,rgb(0, 4, 153) 189.6deg,rgb(0, 5, 153) 190.1deg,rgb(0, 6, 153) 190.7deg,rgb(0, 8, 153) 191.3deg,rgb(0, 9, 153) 191.8deg,rgb(0, 10, 153) 192.4deg,rgb(0, 12, 153) 193.1deg,rgb(0, 13, 153) 193.9deg,rgb(0, 15, 153) 194.6deg,rgb(0, 16, 153) 195.4deg,rgb(0, 18, 153) 196.2deg,rgb(0, 19, 153) 197.0deg,rgb(0, 21, 153) 197.8deg,rgb(0, 22, 153) 198.7deg,rgb(0, 24, 153) 199.6deg,rgb(0, 25, 153) 200.4deg,rgb(0, 27, 153) 201.3deg,rgb(0, 28, 153) 202.3deg,rgb(0, 30, 153) 203.3deg,rgb(0, 32, 153) 204.4deg,rgb(0, 34, 153) 205.6deg,rgb(0, 36, 153) 206.7deg,rgb(0, 38, 153) 207.9deg,rgb(0, 40, 153) 209.2deg,rgb(0, 42, 153) 210.4deg,rgb(0, 44, 153) 211.7deg,rgb(0, 46, 153) 213.0deg,rgb(0, 48, 153) 214.4deg,rgb(0, 50, 153) 215.7deg,rgb(0, 52, 153) 217.1deg,rgb(0, 54, 153) 218.6deg,rgb(0, 57, 153) 220.1deg,rgb(0, 59, 153) 221.6deg,rgb(0, 62, 153) 223.2deg,rgb(0, 64, 153) 224.8deg,rgb(0, 67, 153) 226.4deg,rgb(0, 70, 153) 228.0deg,rgb(0, 73, 153) 229.7deg,rgb(0, 76, 153) 231.3deg,rgb(0, 79, 153) 233.0deg,rgb(0, 82, 153) 234.7deg,rgb(0, 85, 153) 236.4deg,rgb(0, 88, 153) 238.0deg,rgb(0, 92, 153) 239.6deg,rgb(0, 95, 153) 241.2deg,rgb(0, 99, 153) 242.8deg,rgb(0, 102, 153) 244.4deg,rgb(0, 106, 153) 246.0deg,rgb(0, 110, 153) 247.6deg,rgb(0, 115, 153) 249.2deg,rgb(0, 119, 153) 250.9deg,rgb(0, 124, 153) 252.4deg,rgb(0, 129, 153) 254.0deg,rgb(0, 134, 153) 255.6deg,rgb(0, 138, 153) 256.9deg,rgb(0, 143, 153) 258.2deg,rgb(0, 148, 153) 259.4deg,rgb(0, 153, 152) 260.7deg,rgb(0, 153, 147) 262.0deg,rgb(0, 153, 142) 263.2deg,rgb(0, 153, 137) 264.4deg,rgb(0, 153, 132) 265.7deg,rgb(0, 153, 127) 266.9deg,rgb(0, 153, 122) 268.0deg,rgb(0, 153, 117) 269.2deg,rgb(0, 153, 112) 270.4deg,rgb(0, 153, 108) 271.2deg,rgb(0, 153, 105) 272.1deg,rgb(0, 153, 101) 272.9deg,rgb(0, 153, 98) 273.7deg,rgb(0, 153, 95) 274.5deg,rgb(0, 153, 91) 275.4deg,rgb(0, 153, 88) 276.2deg,rgb(0, 153, 84) 277.0deg,rgb(0, 153, 81) 277.7deg,rgb(0, 153, 78) 278.5deg,rgb(0, 153, 74) 279.3deg,rgb(0, 153, 71) 280.0deg,rgb(0, 153, 69) 280.6deg,rgb(0, 153, 66) 281.1deg,rgb(0, 153, 64) 281.7deg,rgb(0, 153, 62) 282.2deg,rgb(0, 153, 59) 282.7deg,rgb(0, 153, 57) 283.3deg,rgb(0, 153, 55) 283.8deg,rgb(0, 153, 52) 284.3deg,rgb(0, 153, 50) 284.8deg,rgb(0, 153, 48) 285.3deg,rgb(0, 153, 45) 285.8deg,rgb(0, 153, 43) 286.3deg,rgb(0, 153, 41) 286.7deg,rgb(0, 153, 39) 287.1deg,rgb(0, 153, 38) 287.5deg,rgb(0, 153, 36) 287.9deg,rgb(0, 153, 34) 288.2deg,rgb(0, 153, 33) 288.6deg,rgb(0, 153, 31) 289.0deg,rgb(0, 153, 29) 289.3deg,rgb(0, 153, 27) 289.7deg,rgb(0, 153, 25) 290.1deg,rgb(0, 153, 23) 290.5deg,rgb(0, 153, 21) 290.8deg,rgb(0, 153, 20) 291.1deg,rgb(0, 153, 19) 291.4deg,rgb(0, 153, 17) 291.7deg,rgb(0, 153, 16) 292.0deg,rgb(0, 153, 15) 292.2deg,rgb(0, 153, 13) 292.5deg,rgb(0, 153, 12) 292.8deg,rgb(0, 153, 10) 293.1deg,rgb(0, 153, 8) 293.4deg,rgb(0, 153, 7) 293.7deg,rgb(0, 153, 5) 294.0deg,rgb(0, 153, 3) 294.3deg,rgb(0, 153, 1) 294.5deg,rgb(0, 153, 0) 294.7deg,rgb(0, 153, 0) 294.9deg,rgb(0, 153, 0) 295.1deg,rgb(0, 153, 0) 295.3deg,rgb(0, 153, 0) 295.6deg,rgb(0, 153, 0) 295.8deg,rgb(0, 153, 0) 296.0deg,rgb(0, 153, 0) 296.2deg,rgb(0, 153, 0) 296.5deg,rgb(0, 153, 0) 296.7deg,rgb(0, 153, 0) 296.9deg,rgb(0, 153, 0) 297.1deg,rgb(0, 153, 0) 297.3deg,rgb(0, 153, 0) 297.5deg,rgb(0, 153, 0) 297.7deg,rgb(0, 153, 0) 297.9deg,rgb(0, 153, 0) 298.1deg,rgb(0, 153, 0) 298.3deg,rgb(0, 153, 0) 298.5deg,rgb(0, 153, 0) 298.7deg,rgb(0, 153, 0) 298.9deg,rgb(0, 153, 0) 299.1deg,rgb(0, 153, 0) 299.3deg,rgb(0, 153, 0) 299.5deg,rgb(0, 153, 0) 299.6deg,rgb(0, 153, 0) 299.8deg,rgb(0, 153, 0) 300.0deg,rgb(0, 153, 0) 300.2deg,rgb(0, 153, 0) 300.4deg,rgb(0, 153, 0) 300.6deg,rgb(0, 153, 0) 300.8deg,rgb(0, 153, 0) 301.0deg,rgb(0, 153, 0) 301.2deg,rgb(0, 153, 0) 301.5deg,rgb(0, 153, 0) 301.7deg,rgb(0, 153, 0) 301.9deg,rgb(0, 153, 0) 302.1deg,rgb(0, 153, 0) 302.3deg,rgb(0, 153, 0) 302.5deg,rgb(0, 153, 0) 302.7deg,rgb(0, 153, 0) 302.9deg,rgb(0, 153, 0) 303.1deg,rgb(0, 153, 0) 303.4deg,rgb(0, 153, 0) 303.6deg,rgb(0, 153, 0) 303.8deg,rgb(0, 153, 0) 304.0deg,rgb(0, 153, 0) 304.3deg,rgb(0, 153, 0) 304.5deg,rgb(0, 153, 0) 304.7deg,rgb(0, 153, 0) 305.0deg,rgb(0, 153, 0) 305.2deg,rgb(0, 153, 0) 305.5deg,rgb(0, 153, 0) 305.7deg,rgb(0, 153, 0) 306.0deg,rgb(0, 153, 0) 306.2deg,rgb(0, 153, 0) 306.5deg,rgb(0, 153, 0) 306.7deg,rgb(0, 153, 0) 307.0deg,rgb(0, 153, 0) 307.3deg,rgb(0, 153, 0) 307.6deg,rgb(0, 153, 0) 307.8deg,rgb(0, 153, 0) 308.1deg,rgb(0, 153, 0) 308.4deg,rgb(0, 153, 0) 308.7deg,rgb(0, 153, 0) 309.0deg,rgb(0, 153, 0) 309.4deg,rgb(0, 153, 0) 309.7deg,rgb(0, 153, 0) 310.0deg,rgb(0, 153, 0) 310.3deg,rgb(0, 153, 0) 310.7deg,rgb(0, 153, 0) 311.0deg,rgb(0, 153, 0) 311.4deg,rgb(0, 153, 0) 311.7deg,rgb(0, 153, 0) 312.1deg,rgb(0, 153, 0) 312.5deg,rgb(0, 153, 0) 312.9deg,rgb(0, 153, 0) 313.3deg,rgb(0, 153, 0) 313.7deg,rgb(0, 153, 0) 314.1deg,rgb(0, 153, 0) 314.5deg,rgb(0, 153, 0) 314.9deg,rgb(0, 153, 0) 315.4deg,rgb(0, 153, 0) 315.8deg,rgb(0, 153, 0) 316.3deg,rgb(0, 153, 0) 316.8deg,rgb(0, 153, 0) 317.3deg,rgb(0, 153, 0) 317.8deg,rgb(0, 153, 0) 318.4deg,rgb(4, 153, 0) 318.9deg,rgb(8, 153, 0) 319.4deg,rgb(12, 153, 0) 320.0deg,rgb(16, 153, 0) 320.6deg,rgb(19, 153, 0) 321.2deg,rgb(22, 153, 0) 321.8deg,rgb(25, 153, 0) 322.4deg,rgb(29, 153, 0) 323.1deg,rgb(32, 153, 0) 323.8deg,rgb(35, 153, 0) 324.5deg,rgb(39, 153, 0) 325.2deg,rgb(42, 153, 0) 326.0deg,rgb(45, 153, 0) 326.8deg,rgb(48, 153, 0) 327.6deg,rgb(51, 153, 0) 328.4deg,rgb(54, 153, 0) 329.2deg,rgb(57, 153, 0) 330.0deg,rgb(60, 153, 0) 330.9deg,rgb(63, 153, 0) 331.8deg,rgb(66, 153, 0) 332.8deg,rgb(69, 153, 0) 333.8deg,rgb(73, 153, 0) 334.8deg,rgb(76, 153, 0) 335.9deg,rgb(79, 153, 0) 337.0deg,rgb(83, 153, 0) 338.1deg,rgb(86, 153, 0) 339.2deg,rgb(89, 153, 0) 340.4deg,rgb(92, 153, 0) 341.6deg,rgb(96, 153, 0) 342.8deg,rgb(99, 153, 0) 344.0deg,rgb(102, 153, 0) 345.3deg,rgb(106, 153, 0) 346.7deg,rgb(110, 153, 0) 348.1deg,rgb(114, 153, 0) 349.6deg,rgb(117, 153, 0) 351.1deg,rgb(121, 153, 0) 352.6deg,rgb(125, 153, 0) 354.1deg,rgb(129, 153, 0) 355.6deg,rgb(133, 153, 0) 357.2deg,rgb(136, 153, 0) 358.8deg,rgb(140, 153, 0) 360.3deg)"></div>
<div style="position:absolute;left:0;top:0;width:100%;height:100%;clip-path:polygon(133.1px 30.7px,479.8px 63.1px,186.7px 362.0px);background:radial-gradient(circle at 210.6px 107.8px,rgba(255,255,255,0.95) 0px,rgba(255,255,255,0.5) 30px,rgba(255,255,255,0) 90px),conic-gradient(from 0deg at 210.6px 107.8px,rgb(179, 255, 10) -15.4deg,rgb(255, 247, 10) 7.6deg,rgb(255, 182, 8) 29.9deg,rgb(255, 139, 7) 46.5deg,rgb(255, 107, 6) 57.6deg,rgb(255, 83, 5) 65.0deg,rgb(255, 64, 5) 70.1deg,rgb(255, 47, 4) 73.9deg,rgb(255, 32, 4) 76.7deg,rgb(255, 19, 4) 78.8deg,rgb(255, 4, 4) 80.6deg,rgb(255, 4, 38) 85.4deg,rgb(255, 4, 69) 91.3deg,rgb(255, 5, 101) 98.7deg,rgb(255, 5, 138) 107.8deg,rgb(255, 5, 180) 118.5deg,rgb(255, 6, 233) 130.5deg,rgb(216, 6, 255) 142.8deg,rgb(164, 5, 255) 154.5deg,rgb(121, 5, 255) 164.6deg,rgb(82, 5, 255) 173.0deg,rgb(45, 4, 255) 179.9deg,rgb(4, 4, 255) 185.4deg,rgb(4, 20, 255) 187.1deg,rgb(4, 35, 255) 189.4deg,rgb(5, 52, 255) 192.3deg,rgb(5, 70, 255) 196.2deg,rgb(6, 91, 255) 201.7deg,rgb(7, 117, 255) 209.8deg,rgb(7, 152, 255) 222.2deg,rgb(9, 199, 255) 240.8deg,rgb(10, 255, 241) 264.9deg,rgb(10, 255, 164) 287.7deg,rgb(9, 255, 91) 304.1deg,rgb(8, 255, 9) 314.9deg,rgb(99, 255, 9) 326.9deg,rgb(179, 255, 10) 344.6deg,rgb(255, 247, 10) 367.6deg)"></div>
</div>
<div style="position:absolute;left:1440px;top:459px;width:211px;height:143px;overflow:hidden">
<div style="position:absolute;left:0;top:0;width:100%;height:100%;background:linear-gradient(135deg,#4e8a00 0%,#8a9000 45%,#9a7800 80%,#8a6000 100%)"></div>
<div style="position:absolute;left:0;top:0;width:100%;height:100%;clip-path:polygon(0px 13px,211px 128px,211px 143px,0px 143px);background:linear-gradient(110deg,#a8ff00 0%,#ffff00 42%,#ffc800 72%,#ffa000 100%)"></div>
</div>
<canvas id="ciecv" width="639" height="491" style="left:1018px;top:119px"></canvas>
<canvas id="insetcv" width="211" height="143" style="left:1440px;top:459px"></canvas>
<svg width="1667" height="1005" viewBox="0 0 1667 1005" style="pointer-events:none">
<rect x="1143.8" y="141.6" width="13.2" height="13.2" fill="#22a622" fill-opacity="0.3" stroke="#f6f6f6" stroke-width="1.8"/>
<rect x="1155.6" y="153.7" width="13.2" height="13.2" fill="#4c9a4c" fill-opacity="0.3" stroke="#f6f6f6" stroke-width="1.8"/>
<rect x="1168.2" y="165.8" width="13.2" height="13.2" fill="#62a062" fill-opacity="0.3" stroke="#f6f6f6" stroke-width="1.8"/>
<rect x="1182.8" y="180.9" width="13.2" height="13.2" fill="#7aa67a" fill-opacity="0.3" stroke="#f6f6f6" stroke-width="1.8"/>
<rect x="1201.0" y="198.3" width="13.2" height="13.2" fill="#a8b8a0" fill-opacity="0.3" stroke="#f6f6f6" stroke-width="1.8"/>
<rect x="1227.7" y="149.4" width="13.2" height="13.2" fill="#b4b428" fill-opacity="0.3" stroke="#f6f6f6" stroke-width="1.8"/>
<rect x="1226.4" y="162.5" width="13.2" height="13.2" fill="#b0b04e" fill-opacity="0.3" stroke="#f6f6f6" stroke-width="1.8"/>
<rect x="1225.2" y="174.4" width="13.2" height="13.2" fill="#b4b466" fill-opacity="0.3" stroke="#f6f6f6" stroke-width="1.8"/>
<rect x="1223.9" y="187.7" width="13.2" height="13.2" fill="#b4b47e" fill-opacity="0.3" stroke="#f6f6f6" stroke-width="1.8"/>
<rect x="1222.7" y="202.8" width="13.2" height="13.2" fill="#bcbc9c" fill-opacity="0.3" stroke="#f6f6f6" stroke-width="1.8"/>
<rect x="1158.4" y="229.8" width="13.2" height="13.2" fill="#20a8a8" fill-opacity="0.3" stroke="#f6f6f6" stroke-width="1.8"/>
<rect x="1170.7" y="227.3" width="13.2" height="13.2" fill="#58aeae" fill-opacity="0.3" stroke="#f6f6f6" stroke-width="1.8"/>
<rect x="1182.8" y="224.8" width="13.2" height="13.2" fill="#70b0b0" fill-opacity="0.3" stroke="#f6f6f6" stroke-width="1.8"/>
<rect x="1195.4" y="223.5" width="13.2" height="13.2" fill="#88b2b2" fill-opacity="0.3" stroke="#f6f6f6" stroke-width="1.8"/>
<rect x="1208.8" y="221.0" width="13.2" height="13.2" fill="#a0b4b4" fill-opacity="0.3" stroke="#f6f6f6" stroke-width="1.8"/>
<rect x="1491.0" y="174.4" width="13.2" height="13.2" fill="#b82020" fill-opacity="0.3" stroke="#f6f6f6" stroke-width="1.8"/>
<rect x="1426.7" y="184.7" width="13.2" height="13.2" fill="#b04a4a" fill-opacity="0.3" stroke="#f6f6f6" stroke-width="1.8"/>
<rect x="1371.8" y="194.8" width="13.2" height="13.2" fill="#b05c5c" fill-opacity="0.3" stroke="#f6f6f6" stroke-width="1.8"/>
<rect x="1322.7" y="201.6" width="13.2" height="13.2" fill="#b07070" fill-opacity="0.3" stroke="#f6f6f6" stroke-width="1.8"/>
<rect x="1269.8" y="210.9" width="13.2" height="13.2" fill="#b08c8c" fill-opacity="0.3" stroke="#f6f6f6" stroke-width="1.8"/>
<rect x="1238.8" y="235.8" width="13.2" height="13.2" fill="#b098b4" fill-opacity="0.3" stroke="#f6f6f6" stroke-width="1.8"/>
<rect x="1257.7" y="255.0" width="13.2" height="13.2" fill="#b080b4" fill-opacity="0.3" stroke="#f6f6f6" stroke-width="1.8"/>
<rect x="1276.8" y="274.6" width="13.2" height="13.2" fill="#b070b4" fill-opacity="0.3" stroke="#f6f6f6" stroke-width="1.8"/>
<rect x="1302.5" y="300.6" width="13.2" height="13.2" fill="#b050b4" fill-opacity="0.3" stroke="#f6f6f6" stroke-width="1.8"/>
<rect x="1335.7" y="331.9" width="13.2" height="13.2" fill="#a820a8" fill-opacity="0.3" stroke="#f6f6f6" stroke-width="1.8"/>
<rect x="1218.1" y="249.0" width="13.2" height="13.2" fill="#9090b8" fill-opacity="0.3" stroke="#f6f6f6" stroke-width="1.8"/>
<rect x="1215.8" y="285.7" width="13.2" height="13.2" fill="#8080b8" fill-opacity="0.3" stroke="#f6f6f6" stroke-width="1.8"/>
<rect x="1211.8" y="330.5" width="13.2" height="13.2" fill="#6a6ab8" fill-opacity="0.3" stroke="#f6f6f6" stroke-width="1.8"/>
<rect x="1205.8" y="387.5" width="13.2" height="13.2" fill="#5050b4" fill-opacity="0.3" stroke="#f6f6f6" stroke-width="1.8"/>
<rect x="1197.7" y="473.6" width="13.2" height="13.2" fill="#1010a0" fill-opacity="0.3" stroke="#f6f6f6" stroke-width="1.8"/>
<circle cx="1151.6" cy="149.5" r="4.1" fill="#22a622" stroke="#111" stroke-width="1.5"/>
<circle cx="1162.2" cy="160.3" r="4.1" fill="#4c9a4c" stroke="#111" stroke-width="1.5"/>
<circle cx="1174.8" cy="172.6" r="4.1" fill="#62a062" stroke="#111" stroke-width="1.5"/>
<circle cx="1189.4" cy="187.7" r="4.1" fill="#7aa67a" stroke="#111" stroke-width="1.5"/>
<circle cx="1207.6" cy="205.2" r="4.1" fill="#a8b8a0" stroke="#111" stroke-width="1.5"/>
<circle cx="1234.3" cy="156.5" r="4.1" fill="#b4b428" stroke="#111" stroke-width="1.5"/>
<circle cx="1233.0" cy="169.3" r="4.1" fill="#b0b04e" stroke="#111" stroke-width="1.5"/>
<circle cx="1231.8" cy="181.2" r="4.1" fill="#b4b466" stroke="#111" stroke-width="1.5"/>
<circle cx="1230.5" cy="194.6" r="4.1" fill="#b4b47e" stroke="#111" stroke-width="1.5"/>
<circle cx="1229.3" cy="209.6" r="4.1" fill="#bcbc9c" stroke="#111" stroke-width="1.5"/>
<circle cx="1165.0" cy="235.6" r="4.1" fill="#20a8a8" stroke="#111" stroke-width="1.5"/>
<circle cx="1177.3" cy="233.4" r="4.1" fill="#58aeae" stroke="#111" stroke-width="1.5"/>
<circle cx="1189.4" cy="231.2" r="4.1" fill="#70b0b0" stroke="#111" stroke-width="1.5"/>
<circle cx="1202.0" cy="229.8" r="4.1" fill="#88b2b2" stroke="#111" stroke-width="1.5"/>
<circle cx="1215.4" cy="227.4" r="4.1" fill="#a0b4b4" stroke="#111" stroke-width="1.5"/>
<circle cx="1502.4" cy="182.5" r="4.1" fill="#b82020" stroke="#111" stroke-width="1.5"/>
<circle cx="1443.9" cy="190.5" r="4.1" fill="#b04a4a" stroke="#111" stroke-width="1.5"/>
<circle cx="1384.2" cy="201.4" r="4.1" fill="#b05c5c" stroke="#111" stroke-width="1.5"/>
<circle cx="1330.5" cy="209.4" r="4.1" fill="#b07070" stroke="#111" stroke-width="1.5"/>
<circle cx="1275.7" cy="217.8" r="4.1" fill="#b08c8c" stroke="#111" stroke-width="1.5"/>
<circle cx="1245.4" cy="242.4" r="4.1" fill="#b098b4" stroke="#111" stroke-width="1.5"/>
<circle cx="1263.0" cy="261.6" r="4.1" fill="#b080b4" stroke="#111" stroke-width="1.5"/>
<circle cx="1283.4" cy="280.5" r="4.1" fill="#b070b4" stroke="#111" stroke-width="1.5"/>
<circle cx="1313.4" cy="309.0" r="4.1" fill="#b050b4" stroke="#111" stroke-width="1.5"/>
<circle cx="1344.5" cy="339.5" r="4.1" fill="#a820a8" stroke="#111" stroke-width="1.5"/>
<circle cx="1224.7" cy="256.1" r="4.1" fill="#9090b8" stroke="#111" stroke-width="1.5"/>
<circle cx="1222.0" cy="291.8" r="4.1" fill="#8080b8" stroke="#111" stroke-width="1.5"/>
<circle cx="1218.0" cy="337.1" r="4.1" fill="#6a6ab8" stroke="#111" stroke-width="1.5"/>
<circle cx="1211.6" cy="396.8" r="4.1" fill="#5050b4" stroke="#111" stroke-width="1.5"/>
<circle cx="1201.9" cy="466.4" r="4.1" fill="#1010a0" stroke="#111" stroke-width="1.5"/>
<rect x="1220.6" y="218.6" width="13.6" height="13.6" fill="#fff" fill-opacity="0.3" stroke="#000" stroke-width="2"/>
<circle cx="1227.6" cy="224.3" r="4.2" fill="#fdfdfd" stroke="#111" stroke-width="1.4"/>
<rect x="1439.8" y="458.7" width="211" height="143.6" fill="none" stroke="#9a9a9a" stroke-width="1.5"/>
<rect x="1537.5" y="522.3" width="13.6" height="13.6" fill="none" stroke="#f4f4f4" stroke-width="1.6"/>
<circle cx="1537.8" cy="536.8" r="4.4" fill="#b4b428" stroke="#111" stroke-width="1.4"/>
</svg>

<script>
(function(){
var cv=document.getElementById('ciecv');
if(!cv||!cv.getContext)return;
var W=cv.width,H=cv.height,ctx=cv.getContext('2d');
var L=[273.37,477.71,272.96,477.98,272.19,478.25,270.95,478.26,268.47,477.47,261.99,472.77,249.83,462.63,241.25,455.53,230.00,446.30,216.46,434.98,199.83,419.96,179.86,399.63,153.37,367.66,122.09,323.94,88.16,269.52,55.50,210.67,29.97,154.18,12.66,106.55,3.70,71.15,1.53,46.50,4.94,29.57,13.08,18.82,24.61,13.34,38.33,11.31,53.29,10.81,68.49,11.00,84.33,11.74,101.41,12.97,119.97,14.64,140.36,16.70,162.98,19.13,187.98,21.92,215.66,25.05,246.08,28.53,279.26,32.35,315.05,36.47,352.91,40.81,391.80,45.31,429.50,49.64,499.43,57.64,553.81,63.92,592.40,68.35,620.64,71.61,639.23,73.72,650.28,75.00,659.88,76.11,663.60,76.53];
function g(c){return c<=0.0031308?12.92*c:1.055*Math.pow(c,1/2.4)-0.055;}
var GM=window.GMODE||2;function GF(c){return GM==1?g(c):(GM==2?Math.pow(c,1/1.3):c);}
function col(u,v,dim){
 var d=6*u-16*v+12,x=9*u/d,y=4*v/d;
 if(y<=0.0001)y=0.0001;
 var X=x/y,Z=(1-x-y)/y;
 var R=3.2406*X-1.5372-0.4986*Z,G=-0.9689*X+1.8758+0.0415*Z,B=0.0557*X-0.2040+1.0570*Z;
 var ins=(R>=0&&G>=0&&B>=0);
 if(R<0)R=0;if(G<0)G=0;if(B<0)B=0;
 var m=Math.max(R,G,B);if(m<=0)m=1;
 R=GF(R/m);G=GF(G/m);B=GF(B/m);
 var k=ins?1:dim;
 return [R*k*255,G*k*255,B*k*255];
}
var off=document.createElement('canvas');off.width=W;off.height=H;
var oc=off.getContext('2d');var im=oc.createImageData(W,H);var p=im.data;
var SU=1064.5,SV=818.9,PX0=1017.9,PY1=609.8,CX=1018,CY=119;
for(var j=0;j<H;j++){for(var i=0;i<W;i++){
 var u=(CX+i+0.5-PX0)/SU,v=(PY1-(CY+j+0.5))/SV;
 var c=col(u,v,0.6);var q=(j*W+i)*4;
 p[q]=c[0];p[q+1]=c[1];p[q+2]=c[2];p[q+3]=255;
}}
oc.putImageData(im,0,0);
ctx.save();ctx.beginPath();
for(var n=0;n<L.length;n+=2){var xx=L[n]-(CX-PX0),yy=L[n+1]-(CY-118.5);if(n==0)ctx.moveTo(xx,yy);else ctx.lineTo(xx,yy);}
ctx.closePath();ctx.clip();ctx.drawImage(off,0,0);ctx.restore();
// inset
var iv=document.getElementById('insetcv');
if(iv){var ic=iv.getContext('2d'),IW=iv.width,IH=iv.height;var im2=ic.createImageData(IW,IH);var p2=im2.data;
 var su=4.5e-4,sv=1.0e-4;
 for(var j=0;j<IH;j++){for(var i=0;i<IW;i++){
  var di=i-104,dj=j-70;var u=0.2039+2.294e-4*di+2.313e-4*dj,v=0.5529+3.564e-5*di-1.4468e-4*dj;
  var c=col(u,v,0.6);var q=(j*IW+i)*4;p2[q]=c[0];p2[q+1]=c[1];p2[q+2]=c[2];p2[q+3]=255;
 }}
 ic.putImageData(im2,0,0);}
})();
</script>
</body></html>
